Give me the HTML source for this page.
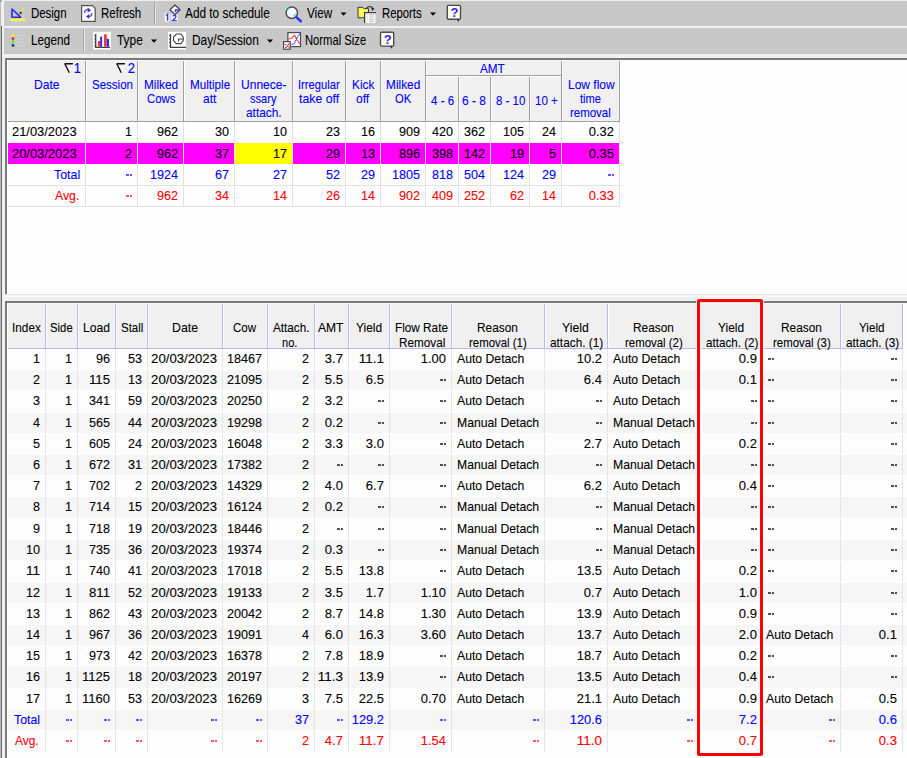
<!DOCTYPE html>
<html><head><meta charset="utf-8"><style>
html,body{margin:0;padding:0;}
body{width:907px;height:758px;overflow:hidden;position:relative;font-family:"Liberation Sans",sans-serif;font-size:13px;background:#f0f0f0;}
body div, body svg{position:absolute;}
.t{white-space:pre;line-height:15px;-webkit-text-stroke:0.1px currentColor;}
</style></head><body>
<div style="left:0px;top:0px;width:907px;height:758px;background:#f0f0f0;"></div>
<div style="left:0px;top:0px;width:1px;height:758px;background:#bcbcbc;"></div>
<div style="left:1px;top:26px;width:1px;height:732px;background:#666666;"></div>
<div style="left:0px;top:0px;width:2px;height:2px;background:#a8a8a8;"></div>
<div style="left:4px;top:1px;width:903px;height:25px;background:#c8c8c8;"></div>
<div style="left:4px;top:28px;width:903px;height:26px;background:#c8c8c8;"></div>
<div style="left:154px;top:2px;width:1px;height:23px;background:#a4a4a4;"></div>
<div style="left:155px;top:2px;width:1px;height:23px;background:#e4e4e4;"></div>
<div style="left:83px;top:29px;width:1px;height:24px;background:#a8a8a8;"></div>
<div style="left:84px;top:29px;width:1px;height:24px;background:#e8e8e8;"></div>
<div class="t" style="left:31.30px;top:6.2px;color:#000;font-size:14.2px;transform-origin:0 0;transform:scaleX(0.8054);">Design</div>
<div class="t" style="left:101.30px;top:6.2px;color:#000;font-size:14.2px;transform-origin:0 0;transform:scaleX(0.8105);">Refresh</div>
<div class="t" style="left:185.00px;top:6.2px;color:#000;font-size:14.2px;transform-origin:0 0;transform:scaleX(0.8336);">Add to schedule</div>
<div class="t" style="left:306.90px;top:6.2px;color:#000;font-size:14.2px;transform-origin:0 0;transform:scaleX(0.8246);">View</div>
<div class="t" style="left:381.50px;top:6.2px;color:#000;font-size:14.2px;transform-origin:0 0;transform:scaleX(0.7985);">Reports</div>
<div class="t" style="left:31.20px;top:33.3px;color:#000;font-size:14.2px;transform-origin:0 0;transform:scaleX(0.8209);">Legend</div>
<div class="t" style="left:117.30px;top:33.3px;color:#000;font-size:14.2px;transform-origin:0 0;transform:scaleX(0.8381);">Type</div>
<div class="t" style="left:191.60px;top:33.3px;color:#000;font-size:14.2px;transform-origin:0 0;transform:scaleX(0.8393);">Day/Session</div>
<div class="t" style="left:304.50px;top:33.3px;color:#000;font-size:14.2px;transform-origin:0 0;transform:scaleX(0.7914);">Normal Size</div>
<svg style="left:0;top:0" width="907" height="56" viewBox="0 0 907 56">
<!-- Design -->
<path d="M12 9 L12 17.2 L20.6 17.2 Z" fill="none" stroke="#2a2aff" stroke-width="1.6" stroke-linejoin="round"/>
<rect x="10.6" y="18.6" width="14.6" height="2.3" fill="#ffff30"/>
<path d="M21.6 11.6 L22.7 7.6" stroke="#f0f000" stroke-width="1.3"/>
<circle cx="20.6" cy="12.9" r="1.1" fill="#202020"/>
<!-- Refresh -->
<path d="M81.6 5.6 L92.5 5.6 L95.2 8.3 L95.2 21.3 L81.6 21.3 Z" fill="#fff" stroke="#505050" stroke-width="1.2"/>
<path d="M84.8 13 L84.8 11 Q85.5 9.5 88 9.5 L88.5 9.5" fill="none" stroke="#5a5aff" stroke-width="1.5"/>
<path d="M87.6 7.6 L91 10.2 L87.6 12.8 Z" fill="#3838c8"/>
<path d="M91.6 13 L91.6 15 Q91 16.5 89 16.5 L88.5 16.5" fill="none" stroke="#5a5aff" stroke-width="1.5"/>
<path d="M89.3 14 L86 16.5 L89.3 19 Z" fill="#3838c8"/>
<!-- Add to schedule -->
<rect x="164.8" y="13" width="4.8" height="8.6" fill="#fff"/>
<rect x="171" y="14.5" width="6.6" height="7.1" fill="#fff"/>
<path d="M166 15.5 L167.6 14.2 L167.6 20.8" fill="none" stroke="#3a3aff" stroke-width="1.5"/>
<path d="M172.6 16.2 Q174 15 175.6 15.6 Q176.4 16.6 175.2 18 L172.4 20.6 L176.8 20.6" fill="none" stroke="#3a3aff" stroke-width="1.4"/>
<path d="M175 5 L180 9.8 L175 14.6 L170 9.8 Z" fill="#fff" stroke="#404040" stroke-width="1.2" stroke-linejoin="round"/>
<path d="M175.5 12.3 L175.5 10 L179.2 10" fill="none" stroke="#3838ff" stroke-width="1.5"/>
<!-- Magnifier -->
<circle cx="291.8" cy="12.7" r="5.7" fill="#fff" stroke="#4a4a4a" stroke-width="1.5"/>
<path d="M287.3 10.8 Q287.8 8.6 289.8 7.9" fill="none" stroke="#20e0f0" stroke-width="1.1"/>
<path d="M293.3 16.3 L295.8 14" fill="none" stroke="#20e0f0" stroke-width="1.1"/>
<path d="M296.6 17.4 L300.8 21.3" stroke="#3232ff" stroke-width="2.6" stroke-linecap="round"/>
<!-- Reports -->
<path d="M358 7.3 L362.8 7.3 L364 8.6 L368.5 8.6 L368.5 17.8 L358 17.8 Z" fill="#ffff30" stroke="#303060" stroke-width="1"/>
<path d="M359.5 11 L366 11 L361 17" fill="none" stroke="#f8f8c0" stroke-width="1.2"/>
<path d="M366.5 8.2 Q369.5 5 372.8 7.8" fill="none" stroke="#505050" stroke-width="1.5"/>
<path d="M370.8 7.6 L374.5 8.2 L372.6 11 Z" fill="#303030"/>
<rect x="364.6" y="12.6" width="10.8" height="10.2" fill="#fff"/>
<path d="M364.6 23 L364.6 12.6 L376 12.6" fill="none" stroke="#404040" stroke-width="1.3"/>
<path d="M366.8 14.8 L367.6 14.8 M369 14.8 L374 14.8 M366.8 17 L367.6 17 M369 17 L374 17 M366.8 19.2 L367.6 19.2 M369 19.2 L374 19.2 M366.8 21.3 L367.6 21.3 M369 21.3 L374 21.3" stroke="#b0b0b0" stroke-width="0.9"/>
<!-- Help 1 -->
<rect x="447.3" y="5.4" width="13.2" height="13.8" rx="1" fill="#fffff0" stroke="#4c4c4c" stroke-width="1.4"/>
<text x="450.6" y="16.8" font-family="Liberation Sans" font-size="13" font-weight="bold" fill="#2a2aff">?</text>
<path d="M456.5 19 L458.8 22.2 L459 19 Z" fill="#303030"/>
<!-- Legend -->
<circle cx="13" cy="35.3" r="1.4" fill="#ffff00"/>
<circle cx="13" cy="38.7" r="1.4" fill="#ff2020"/>
<circle cx="13" cy="42" r="1.4" fill="#20ff20"/>
<circle cx="13" cy="45.4" r="1.4" fill="#2a2a9a"/>
<path d="M16.5 35.5 L24 35.5 M16.5 39 L24 39 M16.5 42.3 L24 42.3 M16.5 45.7 L24 45.7" stroke="#d4d4d4" stroke-width="1.2"/>
<!-- Type -->
<rect x="93" y="31.8" width="18" height="17.7" fill="#fff"/>
<path d="M95.7 34 L95.7 47.3 L110 47.3" fill="none" stroke="#404040" stroke-width="1.3"/>
<path d="M94.5 35.5 L95.5 35.5 M94.5 39 L95.5 39 M94.5 42.5 L95.5 42.5 M94.5 45.8 L95.5 45.8" stroke="#404040" stroke-width="1.3"/>
<rect x="97.9" y="41" width="2" height="5.7" fill="#ff2a2a"/>
<rect x="100.1" y="36.6" width="2" height="10.1" fill="#2a2aff"/>
<rect x="104.1" y="34.3" width="2.6" height="12.4" fill="#ff2a2a"/>
<rect x="106.8" y="38.8" width="2.2" height="7.9" fill="#2a2aff"/>
<!-- Day/Session -->
<rect x="168" y="31.8" width="18" height="17.7" fill="#fff"/>
<path d="M170.5 34 L170.5 47.3 L186 47.3" fill="none" stroke="#404040" stroke-width="1.3"/>
<path d="M169.3 35.5 L170.3 35.5 M169.3 39 L170.3 39 M169.3 42.5 L170.3 42.5 M169.3 45.8 L170.3 45.8" stroke="#404040" stroke-width="1.3"/>
<path d="M176.3 34 L180.8 34 L183.3 37.2 L183.3 40.6 L180.8 43.6 L176.3 43.6 L173.5 40.6 L173.5 37 Z" fill="#fff" stroke="#404040" stroke-width="1.1"/>
<path d="M178.6 41.5 L178.6 39 L183 39" fill="none" stroke="#404040" stroke-width="1.1"/>
<!-- Normal size -->
<rect x="287.9" y="32.6" width="12.6" height="14" fill="#fff" stroke="#4a4a4a" stroke-width="1.2"/>
<path d="M288.5 39 L291.5 38.5 L294.5 35.2 L297 40 L300 44" fill="none" stroke="#ff4040" stroke-width="1.2"/>
<path d="M290 44.5 L294 44 L296 40 L298 36 L300 33.5" fill="none" stroke="#3030ff" stroke-width="1.2" stroke-dasharray="1.2 0.6"/>
<rect x="283.6" y="41.6" width="6.6" height="7.6" fill="#fff" stroke="#404040" stroke-width="1.1"/>
<path d="M284.5 44.5 L286 44.5 L289.5 48 M285 47.5 L286.5 47.5 L289.5 43" fill="none" stroke="#d03070" stroke-width="1"/>
<!-- Help 2 -->
<rect x="380.5" y="32.3" width="13.2" height="13.8" rx="1" fill="#fffff0" stroke="#4c4c4c" stroke-width="1.4"/>
<text x="383.8" y="43.7" font-family="Liberation Sans" font-size="13" font-weight="bold" fill="#2a2aff">?</text>
<path d="M389.7 45.9 L392 49.1 L392.2 45.9 Z" fill="#303030"/>
<!-- dropdown arrows -->
<path d="M340.5 12.5 L346.5 12.5 L343.5 15.8 Z" fill="#000"/>
<path d="M430 12.5 L436 12.5 L433 15.8 Z" fill="#000"/>
<path d="M151 39.5 L157 39.5 L154 42.8 Z" fill="#000"/>
<path d="M267 39.5 L273 39.5 L270 42.8 Z" fill="#000"/>
</svg>

<div style="left:5px;top:58px;width:902px;height:2px;background:#7a7a7a;"></div>
<div style="left:5px;top:58px;width:2px;height:236px;background:#7a7a7a;"></div>
<div style="left:7px;top:60px;width:900px;height:1px;background:#f8f8f8;"></div>
<div style="left:7px;top:60px;width:1px;height:234px;background:#ffffff;"></div>
<div style="left:8px;top:61px;width:899px;height:233px;background:#fefefe;"></div>
<div style="left:5px;top:294px;width:902px;height:1px;background:#e4e4e4;"></div>
<div style="left:5px;top:295px;width:902px;height:2px;background:#f8f8f8;"></div>
<div style="left:8px;top:61px;width:612px;height:60px;background:#f0f0f0;"></div>
<div style="left:8px;top:121px;width:612px;height:1px;background:#a0a0a0;"></div>
<div style="left:85px;top:61px;width:1px;height:60px;background:#a0a0a0;"></div>
<div style="left:86px;top:61px;width:1px;height:60px;background:#ffffff;"></div>
<div style="left:137px;top:61px;width:1px;height:60px;background:#a0a0a0;"></div>
<div style="left:138px;top:61px;width:1px;height:60px;background:#ffffff;"></div>
<div style="left:183px;top:61px;width:1px;height:60px;background:#a0a0a0;"></div>
<div style="left:184px;top:61px;width:1px;height:60px;background:#ffffff;"></div>
<div style="left:234px;top:61px;width:1px;height:60px;background:#a0a0a0;"></div>
<div style="left:235px;top:61px;width:1px;height:60px;background:#ffffff;"></div>
<div style="left:292px;top:61px;width:1px;height:60px;background:#a0a0a0;"></div>
<div style="left:293px;top:61px;width:1px;height:60px;background:#ffffff;"></div>
<div style="left:345px;top:61px;width:1px;height:60px;background:#a0a0a0;"></div>
<div style="left:346px;top:61px;width:1px;height:60px;background:#ffffff;"></div>
<div style="left:380px;top:61px;width:1px;height:60px;background:#a0a0a0;"></div>
<div style="left:381px;top:61px;width:1px;height:60px;background:#ffffff;"></div>
<div style="left:425px;top:61px;width:1px;height:60px;background:#a0a0a0;"></div>
<div style="left:426px;top:61px;width:1px;height:60px;background:#ffffff;"></div>
<div style="left:458px;top:76px;width:1px;height:45px;background:#a0a0a0;"></div>
<div style="left:459px;top:76px;width:1px;height:45px;background:#ffffff;"></div>
<div style="left:490px;top:76px;width:1px;height:45px;background:#a0a0a0;"></div>
<div style="left:491px;top:76px;width:1px;height:45px;background:#ffffff;"></div>
<div style="left:529px;top:76px;width:1px;height:45px;background:#a0a0a0;"></div>
<div style="left:530px;top:76px;width:1px;height:45px;background:#ffffff;"></div>
<div style="left:561px;top:61px;width:1px;height:60px;background:#a0a0a0;"></div>
<div style="left:562px;top:61px;width:1px;height:60px;background:#ffffff;"></div>
<div style="left:619px;top:61px;width:1px;height:60px;background:#a0a0a0;"></div>
<div style="left:426px;top:75px;width:135px;height:1px;background:#a0a0a0;"></div>
<div style="left:426px;top:76px;width:135px;height:1px;background:#ffffff;"></div>
<div class="t" style="left:33.50px;top:76.9px;color:#0000ff;font-size:13.6px;transform-origin:0 0;transform:scaleX(0.8912);">Date</div>
<div class="t" style="left:91.60px;top:76.9px;color:#0000ff;font-size:13.6px;transform-origin:0 0;transform:scaleX(0.8473);">Session</div>
<div class="t" style="left:144.20px;top:76.9px;color:#0000ff;font-size:13.6px;transform-origin:0 0;transform:scaleX(0.8701);">Milked</div>
<div class="t" style="left:146.50px;top:91.10000000000001px;color:#0000ff;font-size:13.6px;transform-origin:0 0;transform:scaleX(0.8409);">Cows</div>
<div class="t" style="left:189.50px;top:76.9px;color:#0000ff;font-size:13.6px;transform-origin:0 0;transform:scaleX(0.8578);">Multiple</div>
<div class="t" style="left:203.20px;top:91.10000000000001px;color:#0000ff;font-size:13.6px;transform-origin:0 0;transform:scaleX(0.8793);">att</div>
<div class="t" style="left:240.70px;top:76.9px;color:#0000ff;font-size:13.6px;transform-origin:0 0;transform:scaleX(0.8851);">Unnece-</div>
<div class="t" style="left:249.80px;top:91.10000000000001px;color:#0000ff;font-size:13.6px;transform-origin:0 0;transform:scaleX(0.8155);">ssary</div>
<div class="t" style="left:245.70px;top:105.30000000000001px;color:#0000ff;font-size:13.6px;transform-origin:0 0;transform:scaleX(0.8719);">attach.</div>
<div class="t" style="left:297.80px;top:76.9px;color:#0000ff;font-size:13.6px;transform-origin:0 0;transform:scaleX(0.8235);">Irregular</div>
<div class="t" style="left:298.60px;top:91.10000000000001px;color:#0000ff;font-size:13.6px;transform-origin:0 0;transform:scaleX(0.9057);">take off</div>
<div class="t" style="left:351.50px;top:76.9px;color:#0000ff;font-size:13.6px;transform-origin:0 0;transform:scaleX(0.8708);">Kick</div>
<div class="t" style="left:355.70px;top:91.10000000000001px;color:#0000ff;font-size:13.6px;transform-origin:0 0;transform:scaleX(0.8858);">off</div>
<div class="t" style="left:385.70px;top:76.9px;color:#0000ff;font-size:13.6px;transform-origin:0 0;transform:scaleX(0.8727);">Milked</div>
<div class="t" style="left:394.80px;top:91.10000000000001px;color:#0000ff;font-size:13.6px;transform-origin:0 0;transform:scaleX(0.8243);">OK</div>
<div class="t" style="left:567.70px;top:76.9px;color:#0000ff;font-size:13.6px;transform-origin:0 0;transform:scaleX(0.8819);">Low flow</div>
<div class="t" style="left:580.10px;top:91.10000000000001px;color:#0000ff;font-size:13.6px;transform-origin:0 0;transform:scaleX(0.8173);">time</div>
<div class="t" style="left:570.20px;top:105.30000000000001px;color:#0000ff;font-size:13.6px;transform-origin:0 0;transform:scaleX(0.8435);">removal</div>
<div class="t" style="left:480.00px;top:61.3px;color:#0000ff;font-size:13.6px;transform-origin:0 0;transform:scaleX(0.8639);">AMT</div>
<div class="t" style="left:430.90px;top:93.3px;color:#0000ff;font-size:13.6px;transform-origin:0 0;transform:scaleX(0.8490);">4 - 6</div>
<div class="t" style="left:462.30px;top:93.3px;color:#0000ff;font-size:13.6px;transform-origin:0 0;transform:scaleX(0.8747);">6 - 8</div>
<div class="t" style="left:495.80px;top:93.3px;color:#0000ff;font-size:13.6px;transform-origin:0 0;transform:scaleX(0.8425);">8 - 10</div>
<div class="t" style="left:534.70px;top:93.3px;color:#0000ff;font-size:13.6px;transform-origin:0 0;transform:scaleX(0.8492);">10 +</div>
<svg style="left:64px;top:62px" width="12" height="13" viewBox="0 0 12 13"><path d="M9 1.8 L5.5 10.8" stroke="#fff" stroke-width="1.2"/><path d="M0.5 1.8 L9 1.8 M0.8 1.8 L5.3 10.8" fill="none" stroke="#111" stroke-width="1.4"/></svg>
<div class="t" style="left:-219.5px;top:60.5px;width:300px;text-align:right;color:#0000ff;font-size:13.6px;transform-origin:100% 0;transform:scaleX(0.9277);font-size:14px;">1</div>
<svg style="left:116px;top:62px" width="12" height="13" viewBox="0 0 12 13"><path d="M9 1.8 L5.5 10.8" stroke="#fff" stroke-width="1.2"/><path d="M0.5 1.8 L9 1.8 M0.8 1.8 L5.3 10.8" fill="none" stroke="#111" stroke-width="1.4"/></svg>
<div class="t" style="left:-165px;top:60.5px;width:300px;text-align:right;color:#0000ff;font-size:13.6px;transform-origin:100% 0;transform:scaleX(0.9277);font-size:14px;">2</div>
<div style="left:8px;top:143px;width:611px;height:21px;background:#ff00ff;"></div>
<div style="left:235px;top:143px;width:57px;height:21px;background:#ffff00;"></div>
<div style="left:8px;top:185px;width:612px;height:1px;background:#e2e2e2;"></div>
<div style="left:8px;top:206px;width:612px;height:1px;background:#e2e2e2;"></div>
<div style="left:85px;top:122px;width:1px;height:84px;background:#e2e2e2;"></div>
<div style="left:137px;top:122px;width:1px;height:84px;background:#e2e2e2;"></div>
<div style="left:183px;top:122px;width:1px;height:84px;background:#e2e2e2;"></div>
<div style="left:234px;top:122px;width:1px;height:84px;background:#e2e2e2;"></div>
<div style="left:292px;top:122px;width:1px;height:84px;background:#e2e2e2;"></div>
<div style="left:345px;top:122px;width:1px;height:84px;background:#e2e2e2;"></div>
<div style="left:380px;top:122px;width:1px;height:84px;background:#e2e2e2;"></div>
<div style="left:425px;top:122px;width:1px;height:84px;background:#e2e2e2;"></div>
<div style="left:458px;top:122px;width:1px;height:84px;background:#e2e2e2;"></div>
<div style="left:490px;top:122px;width:1px;height:84px;background:#e2e2e2;"></div>
<div style="left:529px;top:122px;width:1px;height:84px;background:#e2e2e2;"></div>
<div style="left:561px;top:122px;width:1px;height:84px;background:#e2e2e2;"></div>
<div style="left:619px;top:122px;width:1px;height:84px;background:#e2e2e2;"></div>
<div class="t" style="left:12.30px;top:124.0px;color:#000;font-size:13.6px;transform-origin:0 0;transform:scaleX(0.9491);">21/03/2023</div>
<div class="t" style="left:-167.6px;top:124.0px;width:300px;text-align:right;color:#000;font-size:13.6px;transform-origin:100% 0;transform:scaleX(0.9277);">1</div>
<div class="t" style="left:-121.6px;top:124.0px;width:300px;text-align:right;color:#000;font-size:13.6px;transform-origin:100% 0;transform:scaleX(0.9277);">962</div>
<div class="t" style="left:-70.6px;top:124.0px;width:300px;text-align:right;color:#000;font-size:13.6px;transform-origin:100% 0;transform:scaleX(0.9277);">30</div>
<div class="t" style="left:-12.600000000000023px;top:124.0px;width:300px;text-align:right;color:#000;font-size:13.6px;transform-origin:100% 0;transform:scaleX(0.9277);">10</div>
<div class="t" style="left:40.39999999999998px;top:124.0px;width:300px;text-align:right;color:#000;font-size:13.6px;transform-origin:100% 0;transform:scaleX(0.9277);">23</div>
<div class="t" style="left:75.39999999999998px;top:124.0px;width:300px;text-align:right;color:#000;font-size:13.6px;transform-origin:100% 0;transform:scaleX(0.9277);">16</div>
<div class="t" style="left:120.39999999999998px;top:124.0px;width:300px;text-align:right;color:#000;font-size:13.6px;transform-origin:100% 0;transform:scaleX(0.9277);">909</div>
<div class="t" style="left:153.39999999999998px;top:124.0px;width:300px;text-align:right;color:#000;font-size:13.6px;transform-origin:100% 0;transform:scaleX(0.9277);">420</div>
<div class="t" style="left:185.39999999999998px;top:124.0px;width:300px;text-align:right;color:#000;font-size:13.6px;transform-origin:100% 0;transform:scaleX(0.9277);">362</div>
<div class="t" style="left:224.39999999999998px;top:124.0px;width:300px;text-align:right;color:#000;font-size:13.6px;transform-origin:100% 0;transform:scaleX(0.9277);">105</div>
<div class="t" style="left:256.4px;top:124.0px;width:300px;text-align:right;color:#000;font-size:13.6px;transform-origin:100% 0;transform:scaleX(0.9277);">24</div>
<div class="t" style="left:314.4px;top:124.0px;width:300px;text-align:right;color:#000;font-size:13.6px;transform-origin:100% 0;transform:scaleX(0.9507);">0.32</div>
<div class="t" style="left:12.30px;top:145.5px;color:#000;font-size:13.6px;transform-origin:0 0;transform:scaleX(0.9491);">20/03/2023</div>
<div class="t" style="left:-167.6px;top:145.5px;width:300px;text-align:right;color:#000;font-size:13.6px;transform-origin:100% 0;transform:scaleX(0.9277);">2</div>
<div class="t" style="left:-121.6px;top:145.5px;width:300px;text-align:right;color:#000;font-size:13.6px;transform-origin:100% 0;transform:scaleX(0.9277);">962</div>
<div class="t" style="left:-70.6px;top:145.5px;width:300px;text-align:right;color:#000;font-size:13.6px;transform-origin:100% 0;transform:scaleX(0.9277);">37</div>
<div class="t" style="left:-12.600000000000023px;top:145.5px;width:300px;text-align:right;color:#000;font-size:13.6px;transform-origin:100% 0;transform:scaleX(0.9277);">17</div>
<div class="t" style="left:40.39999999999998px;top:145.5px;width:300px;text-align:right;color:#000;font-size:13.6px;transform-origin:100% 0;transform:scaleX(0.9277);">29</div>
<div class="t" style="left:75.39999999999998px;top:145.5px;width:300px;text-align:right;color:#000;font-size:13.6px;transform-origin:100% 0;transform:scaleX(0.9277);">13</div>
<div class="t" style="left:120.39999999999998px;top:145.5px;width:300px;text-align:right;color:#000;font-size:13.6px;transform-origin:100% 0;transform:scaleX(0.9277);">896</div>
<div class="t" style="left:153.39999999999998px;top:145.5px;width:300px;text-align:right;color:#000;font-size:13.6px;transform-origin:100% 0;transform:scaleX(0.9277);">398</div>
<div class="t" style="left:185.39999999999998px;top:145.5px;width:300px;text-align:right;color:#000;font-size:13.6px;transform-origin:100% 0;transform:scaleX(0.9277);">142</div>
<div class="t" style="left:224.39999999999998px;top:145.5px;width:300px;text-align:right;color:#000;font-size:13.6px;transform-origin:100% 0;transform:scaleX(0.9277);">19</div>
<div class="t" style="left:256.4px;top:145.5px;width:300px;text-align:right;color:#000;font-size:13.6px;transform-origin:100% 0;transform:scaleX(0.9277);">5</div>
<div class="t" style="left:314.4px;top:145.5px;width:300px;text-align:right;color:#000;font-size:13.6px;transform-origin:100% 0;transform:scaleX(0.9507);">0.35</div>
<div class="t" style="left:54.10px;top:167.0px;color:#0000ff;font-size:13.6px;transform-origin:0 0;transform:scaleX(0.9121);">Total</div>
<div style="left:126px;top:174px;width:3px;height:2px;background:#5a5aff;"></div>
<div style="left:130px;top:174px;width:2px;height:2px;background:#5a5aff;"></div>
<div class="t" style="left:-121.6px;top:167.0px;width:300px;text-align:right;color:#0000ff;font-size:13.6px;transform-origin:100% 0;transform:scaleX(0.9277);">1924</div>
<div class="t" style="left:-70.6px;top:167.0px;width:300px;text-align:right;color:#0000ff;font-size:13.6px;transform-origin:100% 0;transform:scaleX(0.9277);">67</div>
<div class="t" style="left:-12.600000000000023px;top:167.0px;width:300px;text-align:right;color:#0000ff;font-size:13.6px;transform-origin:100% 0;transform:scaleX(0.9277);">27</div>
<div class="t" style="left:40.39999999999998px;top:167.0px;width:300px;text-align:right;color:#0000ff;font-size:13.6px;transform-origin:100% 0;transform:scaleX(0.9277);">52</div>
<div class="t" style="left:75.39999999999998px;top:167.0px;width:300px;text-align:right;color:#0000ff;font-size:13.6px;transform-origin:100% 0;transform:scaleX(0.9277);">29</div>
<div class="t" style="left:120.39999999999998px;top:167.0px;width:300px;text-align:right;color:#0000ff;font-size:13.6px;transform-origin:100% 0;transform:scaleX(0.9277);">1805</div>
<div class="t" style="left:153.39999999999998px;top:167.0px;width:300px;text-align:right;color:#0000ff;font-size:13.6px;transform-origin:100% 0;transform:scaleX(0.9277);">818</div>
<div class="t" style="left:185.39999999999998px;top:167.0px;width:300px;text-align:right;color:#0000ff;font-size:13.6px;transform-origin:100% 0;transform:scaleX(0.9277);">504</div>
<div class="t" style="left:224.39999999999998px;top:167.0px;width:300px;text-align:right;color:#0000ff;font-size:13.6px;transform-origin:100% 0;transform:scaleX(0.9277);">124</div>
<div class="t" style="left:256.4px;top:167.0px;width:300px;text-align:right;color:#0000ff;font-size:13.6px;transform-origin:100% 0;transform:scaleX(0.9277);">29</div>
<div style="left:608px;top:174px;width:3px;height:2px;background:#5a5aff;"></div>
<div style="left:612px;top:174px;width:2px;height:2px;background:#5a5aff;"></div>
<div class="t" style="left:55.00px;top:188.0px;color:#ff0000;font-size:13.6px;transform-origin:0 0;transform:scaleX(0.9011);">Avg.</div>
<div style="left:126px;top:195px;width:3px;height:2px;background:#ff5a5a;"></div>
<div style="left:130px;top:195px;width:2px;height:2px;background:#ff5a5a;"></div>
<div class="t" style="left:-121.6px;top:188.0px;width:300px;text-align:right;color:#ff0000;font-size:13.6px;transform-origin:100% 0;transform:scaleX(0.9277);">962</div>
<div class="t" style="left:-70.6px;top:188.0px;width:300px;text-align:right;color:#ff0000;font-size:13.6px;transform-origin:100% 0;transform:scaleX(0.9277);">34</div>
<div class="t" style="left:-12.600000000000023px;top:188.0px;width:300px;text-align:right;color:#ff0000;font-size:13.6px;transform-origin:100% 0;transform:scaleX(0.9277);">14</div>
<div class="t" style="left:40.39999999999998px;top:188.0px;width:300px;text-align:right;color:#ff0000;font-size:13.6px;transform-origin:100% 0;transform:scaleX(0.9277);">26</div>
<div class="t" style="left:75.39999999999998px;top:188.0px;width:300px;text-align:right;color:#ff0000;font-size:13.6px;transform-origin:100% 0;transform:scaleX(0.9277);">14</div>
<div class="t" style="left:120.39999999999998px;top:188.0px;width:300px;text-align:right;color:#ff0000;font-size:13.6px;transform-origin:100% 0;transform:scaleX(0.9277);">902</div>
<div class="t" style="left:153.39999999999998px;top:188.0px;width:300px;text-align:right;color:#ff0000;font-size:13.6px;transform-origin:100% 0;transform:scaleX(0.9277);">409</div>
<div class="t" style="left:185.39999999999998px;top:188.0px;width:300px;text-align:right;color:#ff0000;font-size:13.6px;transform-origin:100% 0;transform:scaleX(0.9277);">252</div>
<div class="t" style="left:224.39999999999998px;top:188.0px;width:300px;text-align:right;color:#ff0000;font-size:13.6px;transform-origin:100% 0;transform:scaleX(0.9277);">62</div>
<div class="t" style="left:256.4px;top:188.0px;width:300px;text-align:right;color:#ff0000;font-size:13.6px;transform-origin:100% 0;transform:scaleX(0.9277);">14</div>
<div class="t" style="left:314.4px;top:188.0px;width:300px;text-align:right;color:#ff0000;font-size:13.6px;transform-origin:100% 0;transform:scaleX(0.9507);">0.33</div>
<div style="left:5px;top:301px;width:902px;height:2px;background:#7a7a7a;"></div>
<div style="left:5px;top:301px;width:2px;height:457px;background:#7a7a7a;"></div>
<div style="left:7px;top:303px;width:900px;height:1px;background:#f8f8f8;"></div>
<div style="left:7px;top:303px;width:1px;height:455px;background:#ffffff;"></div>
<div style="left:8px;top:304px;width:899px;height:454px;background:#fdfdfd;"></div>
<div style="left:8px;top:304px;width:895px;height:44px;background:#f0f0f0;"></div>
<div style="left:8px;top:348px;width:895px;height:1px;background:#b8b8f4;"></div>
<div style="left:45px;top:304px;width:1px;height:45px;background:#b8b8f4;"></div>
<div style="left:46px;top:304px;width:1px;height:44px;background:#ffffff;"></div>
<div style="left:77px;top:304px;width:1px;height:45px;background:#b8b8f4;"></div>
<div style="left:78px;top:304px;width:1px;height:44px;background:#ffffff;"></div>
<div style="left:115px;top:304px;width:1px;height:45px;background:#b8b8f4;"></div>
<div style="left:116px;top:304px;width:1px;height:44px;background:#ffffff;"></div>
<div style="left:147px;top:304px;width:1px;height:45px;background:#b8b8f4;"></div>
<div style="left:148px;top:304px;width:1px;height:44px;background:#ffffff;"></div>
<div style="left:222px;top:304px;width:1px;height:45px;background:#b8b8f4;"></div>
<div style="left:223px;top:304px;width:1px;height:44px;background:#ffffff;"></div>
<div style="left:267px;top:304px;width:1px;height:45px;background:#b8b8f4;"></div>
<div style="left:268px;top:304px;width:1px;height:44px;background:#ffffff;"></div>
<div style="left:314px;top:304px;width:1px;height:45px;background:#b8b8f4;"></div>
<div style="left:315px;top:304px;width:1px;height:44px;background:#ffffff;"></div>
<div style="left:348px;top:304px;width:1px;height:45px;background:#b8b8f4;"></div>
<div style="left:349px;top:304px;width:1px;height:44px;background:#ffffff;"></div>
<div style="left:389px;top:304px;width:1px;height:45px;background:#b8b8f4;"></div>
<div style="left:390px;top:304px;width:1px;height:44px;background:#ffffff;"></div>
<div style="left:451px;top:304px;width:1px;height:45px;background:#b8b8f4;"></div>
<div style="left:452px;top:304px;width:1px;height:44px;background:#ffffff;"></div>
<div style="left:544px;top:304px;width:1px;height:45px;background:#b8b8f4;"></div>
<div style="left:545px;top:304px;width:1px;height:44px;background:#ffffff;"></div>
<div style="left:607px;top:304px;width:1px;height:45px;background:#b8b8f4;"></div>
<div style="left:608px;top:304px;width:1px;height:44px;background:#ffffff;"></div>
<div style="left:698px;top:304px;width:1px;height:45px;background:#b8b8f4;"></div>
<div style="left:699px;top:304px;width:1px;height:44px;background:#ffffff;"></div>
<div style="left:762px;top:304px;width:1px;height:45px;background:#b8b8f4;"></div>
<div style="left:763px;top:304px;width:1px;height:44px;background:#ffffff;"></div>
<div style="left:840px;top:304px;width:1px;height:45px;background:#b8b8f4;"></div>
<div style="left:841px;top:304px;width:1px;height:44px;background:#ffffff;"></div>
<div style="left:902px;top:304px;width:1px;height:45px;background:#b8b8f4;"></div>
<div class="t" style="left:12.30px;top:320.2px;color:#000;font-size:13.6px;transform-origin:0 0;transform:scaleX(0.8686);">Index</div>
<div class="t" style="left:50.40px;top:320.2px;color:#000;font-size:13.6px;transform-origin:0 0;transform:scaleX(0.8340);">Side</div>
<div class="t" style="left:83.30px;top:320.2px;color:#000;font-size:13.6px;transform-origin:0 0;transform:scaleX(0.8892);">Load</div>
<div class="t" style="left:120.70px;top:320.2px;color:#000;font-size:13.6px;transform-origin:0 0;transform:scaleX(0.8430);">Stall</div>
<div class="t" style="left:171.50px;top:320.2px;color:#000;font-size:13.6px;transform-origin:0 0;transform:scaleX(0.9051);">Date</div>
<div class="t" style="left:233.00px;top:320.2px;color:#000;font-size:13.6px;transform-origin:0 0;transform:scaleX(0.8478);">Cow</div>
<div class="t" style="left:272.50px;top:320.2px;color:#000;font-size:13.6px;transform-origin:0 0;transform:scaleX(0.8622);">Attach.</div>
<div class="t" style="left:282.30px;top:334.59999999999997px;color:#000;font-size:13.6px;transform-origin:0 0;transform:scaleX(0.8146);">no.</div>
<div class="t" style="left:317.80px;top:320.2px;color:#000;font-size:13.6px;transform-origin:0 0;transform:scaleX(0.8883);">AMT</div>
<div class="t" style="left:356.40px;top:320.2px;color:#000;font-size:13.6px;transform-origin:0 0;transform:scaleX(0.8811);">Yield</div>
<div class="t" style="left:395.00px;top:320.2px;color:#000;font-size:13.6px;transform-origin:0 0;transform:scaleX(0.8657);">Flow Rate</div>
<div class="t" style="left:398.90px;top:334.59999999999997px;color:#000;font-size:13.6px;transform-origin:0 0;transform:scaleX(0.8628);">Removal</div>
<div class="t" style="left:477.00px;top:320.2px;color:#000;font-size:13.6px;transform-origin:0 0;transform:scaleX(0.8726);">Reason</div>
<div class="t" style="left:469.40px;top:334.59999999999997px;color:#000;font-size:13.6px;transform-origin:0 0;transform:scaleX(0.8405);">removal (1)</div>
<div class="t" style="left:562.40px;top:320.2px;color:#000;font-size:13.6px;transform-origin:0 0;transform:scaleX(0.8979);">Yield</div>
<div class="t" style="left:550.00px;top:334.59999999999997px;color:#000;font-size:13.6px;transform-origin:0 0;transform:scaleX(0.8705);">attach. (1)</div>
<div class="t" style="left:633.40px;top:320.2px;color:#000;font-size:13.6px;transform-origin:0 0;transform:scaleX(0.8726);">Reason</div>
<div class="t" style="left:624.60px;top:334.59999999999997px;color:#000;font-size:13.6px;transform-origin:0 0;transform:scaleX(0.8405);">removal (2)</div>
<div class="t" style="left:717.80px;top:320.2px;color:#000;font-size:13.6px;transform-origin:0 0;transform:scaleX(0.8811);">Yield</div>
<div class="t" style="left:705.50px;top:334.59999999999997px;color:#000;font-size:13.6px;transform-origin:0 0;transform:scaleX(0.8558);">attach. (2)</div>
<div class="t" style="left:780.90px;top:320.2px;color:#000;font-size:13.6px;transform-origin:0 0;transform:scaleX(0.8726);">Reason</div>
<div class="t" style="left:772.90px;top:334.59999999999997px;color:#000;font-size:13.6px;transform-origin:0 0;transform:scaleX(0.8391);">removal (3)</div>
<div class="t" style="left:858.80px;top:320.2px;color:#000;font-size:13.6px;transform-origin:0 0;transform:scaleX(0.8576);">Yield</div>
<div class="t" style="left:845.70px;top:334.59999999999997px;color:#000;font-size:13.6px;transform-origin:0 0;transform:scaleX(0.8705);">attach. (3)</div>
<div style="left:45px;top:349px;width:1px;height:20px;background:#e4e4e4;"></div>
<div style="left:77px;top:349px;width:1px;height:20px;background:#e4e4e4;"></div>
<div style="left:115px;top:349px;width:1px;height:20px;background:#e4e4e4;"></div>
<div style="left:147px;top:349px;width:1px;height:20px;background:#e4e4e4;"></div>
<div style="left:222px;top:349px;width:1px;height:20px;background:#e4e4e4;"></div>
<div style="left:267px;top:349px;width:1px;height:20px;background:#e4e4e4;"></div>
<div style="left:314px;top:349px;width:1px;height:20px;background:#e4e4e4;"></div>
<div style="left:348px;top:349px;width:1px;height:20px;background:#e4e4e4;"></div>
<div style="left:389px;top:349px;width:1px;height:20px;background:#e4e4e4;"></div>
<div style="left:451px;top:349px;width:1px;height:20px;background:#e4e4e4;"></div>
<div style="left:544px;top:349px;width:1px;height:20px;background:#e4e4e4;"></div>
<div style="left:607px;top:349px;width:1px;height:20px;background:#e4e4e4;"></div>
<div style="left:698px;top:349px;width:1px;height:20px;background:#e4e4e4;"></div>
<div style="left:762px;top:349px;width:1px;height:20px;background:#e4e4e4;"></div>
<div style="left:840px;top:349px;width:1px;height:20px;background:#e4e4e4;"></div>
<div style="left:902px;top:349px;width:1px;height:20px;background:#e4e4e4;"></div>
<div class="t" style="left:-259.8px;top:350.7px;width:300px;text-align:right;color:#000;font-size:13.6px;transform-origin:100% 0;transform:scaleX(0.9277);">1</div>
<div class="t" style="left:-227.8px;top:350.7px;width:300px;text-align:right;color:#000;font-size:13.6px;transform-origin:100% 0;transform:scaleX(0.9277);">1</div>
<div class="t" style="left:-189.8px;top:350.7px;width:300px;text-align:right;color:#000;font-size:13.6px;transform-origin:100% 0;transform:scaleX(0.9277);">96</div>
<div class="t" style="left:-157.8px;top:350.7px;width:300px;text-align:right;color:#000;font-size:13.6px;transform-origin:100% 0;transform:scaleX(0.9277);">53</div>
<div class="t" style="left:-82.80000000000001px;top:350.7px;width:300px;text-align:right;color:#000;font-size:13.6px;transform-origin:100% 0;transform:scaleX(0.9687);">20/03/2023</div>
<div class="t" style="left:-37.80000000000001px;top:350.7px;width:300px;text-align:right;color:#000;font-size:13.6px;transform-origin:100% 0;transform:scaleX(0.9277);">18467</div>
<div class="t" style="left:9.199999999999989px;top:350.7px;width:300px;text-align:right;color:#000;font-size:13.6px;transform-origin:100% 0;transform:scaleX(0.9277);">2</div>
<div class="t" style="left:43.19999999999999px;top:350.7px;width:300px;text-align:right;color:#000;font-size:13.6px;transform-origin:100% 0;transform:scaleX(0.9599);">3.7</div>
<div class="t" style="left:84.19999999999999px;top:350.7px;width:300px;text-align:right;color:#000;font-size:13.6px;transform-origin:100% 0;transform:scaleX(0.9884);">11.1</div>
<div class="t" style="left:146.2px;top:350.7px;width:300px;text-align:right;color:#000;font-size:13.6px;transform-origin:100% 0;transform:scaleX(0.9507);">1.00</div>
<div class="t" style="left:456.60px;top:350.7px;color:#000;font-size:13.6px;transform-origin:0 0;transform:scaleX(0.8991);">Auto Detach</div>
<div class="t" style="left:302.20000000000005px;top:350.7px;width:300px;text-align:right;color:#000;font-size:13.6px;transform-origin:100% 0;transform:scaleX(0.9507);">10.2</div>
<div class="t" style="left:612.60px;top:350.7px;color:#000;font-size:13.6px;transform-origin:0 0;transform:scaleX(0.8991);">Auto Detach</div>
<div class="t" style="left:457.20000000000005px;top:350.7px;width:300px;text-align:right;color:#000;font-size:13.6px;transform-origin:100% 0;transform:scaleX(0.9599);">0.9</div>
<div style="left:768px;top:358px;width:3px;height:2px;background:#505050;"></div>
<div style="left:772px;top:358px;width:2px;height:2px;background:#505050;"></div>
<div style="left:891px;top:358px;width:3px;height:2px;background:#505050;"></div>
<div style="left:895px;top:358px;width:2px;height:2px;background:#505050;"></div>
<div style="left:8px;top:370px;width:899px;height:20px;background:#f6f6f6;"></div>
<div style="left:45px;top:370px;width:1px;height:20px;background:#e4e4e4;"></div>
<div style="left:77px;top:370px;width:1px;height:20px;background:#e4e4e4;"></div>
<div style="left:115px;top:370px;width:1px;height:20px;background:#e4e4e4;"></div>
<div style="left:147px;top:370px;width:1px;height:20px;background:#e4e4e4;"></div>
<div style="left:222px;top:370px;width:1px;height:20px;background:#e4e4e4;"></div>
<div style="left:267px;top:370px;width:1px;height:20px;background:#e4e4e4;"></div>
<div style="left:314px;top:370px;width:1px;height:20px;background:#e4e4e4;"></div>
<div style="left:348px;top:370px;width:1px;height:20px;background:#e4e4e4;"></div>
<div style="left:389px;top:370px;width:1px;height:20px;background:#e4e4e4;"></div>
<div style="left:451px;top:370px;width:1px;height:20px;background:#e4e4e4;"></div>
<div style="left:544px;top:370px;width:1px;height:20px;background:#e4e4e4;"></div>
<div style="left:607px;top:370px;width:1px;height:20px;background:#e4e4e4;"></div>
<div style="left:698px;top:370px;width:1px;height:20px;background:#e4e4e4;"></div>
<div style="left:762px;top:370px;width:1px;height:20px;background:#e4e4e4;"></div>
<div style="left:840px;top:370px;width:1px;height:20px;background:#e4e4e4;"></div>
<div style="left:902px;top:370px;width:1px;height:20px;background:#e4e4e4;"></div>
<div class="t" style="left:-259.8px;top:371.7px;width:300px;text-align:right;color:#000;font-size:13.6px;transform-origin:100% 0;transform:scaleX(0.9277);">2</div>
<div class="t" style="left:-227.8px;top:371.7px;width:300px;text-align:right;color:#000;font-size:13.6px;transform-origin:100% 0;transform:scaleX(0.9277);">1</div>
<div class="t" style="left:-189.8px;top:371.7px;width:300px;text-align:right;color:#000;font-size:13.6px;transform-origin:100% 0;transform:scaleX(0.9709);">115</div>
<div class="t" style="left:-157.8px;top:371.7px;width:300px;text-align:right;color:#000;font-size:13.6px;transform-origin:100% 0;transform:scaleX(0.9277);">13</div>
<div class="t" style="left:-82.80000000000001px;top:371.7px;width:300px;text-align:right;color:#000;font-size:13.6px;transform-origin:100% 0;transform:scaleX(0.9687);">20/03/2023</div>
<div class="t" style="left:-37.80000000000001px;top:371.7px;width:300px;text-align:right;color:#000;font-size:13.6px;transform-origin:100% 0;transform:scaleX(0.9277);">21095</div>
<div class="t" style="left:9.199999999999989px;top:371.7px;width:300px;text-align:right;color:#000;font-size:13.6px;transform-origin:100% 0;transform:scaleX(0.9277);">2</div>
<div class="t" style="left:43.19999999999999px;top:371.7px;width:300px;text-align:right;color:#000;font-size:13.6px;transform-origin:100% 0;transform:scaleX(0.9599);">5.5</div>
<div class="t" style="left:84.19999999999999px;top:371.7px;width:300px;text-align:right;color:#000;font-size:13.6px;transform-origin:100% 0;transform:scaleX(0.9599);">6.5</div>
<div style="left:440px;top:379px;width:3px;height:2px;background:#505050;"></div>
<div style="left:444px;top:379px;width:2px;height:2px;background:#505050;"></div>
<div class="t" style="left:456.60px;top:371.7px;color:#000;font-size:13.6px;transform-origin:0 0;transform:scaleX(0.8991);">Auto Detach</div>
<div class="t" style="left:302.20000000000005px;top:371.7px;width:300px;text-align:right;color:#000;font-size:13.6px;transform-origin:100% 0;transform:scaleX(0.9599);">6.4</div>
<div class="t" style="left:612.60px;top:371.7px;color:#000;font-size:13.6px;transform-origin:0 0;transform:scaleX(0.8991);">Auto Detach</div>
<div class="t" style="left:457.20000000000005px;top:371.7px;width:300px;text-align:right;color:#000;font-size:13.6px;transform-origin:100% 0;transform:scaleX(0.9599);">0.1</div>
<div style="left:768px;top:379px;width:3px;height:2px;background:#505050;"></div>
<div style="left:772px;top:379px;width:2px;height:2px;background:#505050;"></div>
<div style="left:891px;top:379px;width:3px;height:2px;background:#505050;"></div>
<div style="left:895px;top:379px;width:2px;height:2px;background:#505050;"></div>
<div style="left:45px;top:391px;width:1px;height:21px;background:#e4e4e4;"></div>
<div style="left:77px;top:391px;width:1px;height:21px;background:#e4e4e4;"></div>
<div style="left:115px;top:391px;width:1px;height:21px;background:#e4e4e4;"></div>
<div style="left:147px;top:391px;width:1px;height:21px;background:#e4e4e4;"></div>
<div style="left:222px;top:391px;width:1px;height:21px;background:#e4e4e4;"></div>
<div style="left:267px;top:391px;width:1px;height:21px;background:#e4e4e4;"></div>
<div style="left:314px;top:391px;width:1px;height:21px;background:#e4e4e4;"></div>
<div style="left:348px;top:391px;width:1px;height:21px;background:#e4e4e4;"></div>
<div style="left:389px;top:391px;width:1px;height:21px;background:#e4e4e4;"></div>
<div style="left:451px;top:391px;width:1px;height:21px;background:#e4e4e4;"></div>
<div style="left:544px;top:391px;width:1px;height:21px;background:#e4e4e4;"></div>
<div style="left:607px;top:391px;width:1px;height:21px;background:#e4e4e4;"></div>
<div style="left:698px;top:391px;width:1px;height:21px;background:#e4e4e4;"></div>
<div style="left:762px;top:391px;width:1px;height:21px;background:#e4e4e4;"></div>
<div style="left:840px;top:391px;width:1px;height:21px;background:#e4e4e4;"></div>
<div style="left:902px;top:391px;width:1px;height:21px;background:#e4e4e4;"></div>
<div class="t" style="left:-259.8px;top:393.2px;width:300px;text-align:right;color:#000;font-size:13.6px;transform-origin:100% 0;transform:scaleX(0.9277);">3</div>
<div class="t" style="left:-227.8px;top:393.2px;width:300px;text-align:right;color:#000;font-size:13.6px;transform-origin:100% 0;transform:scaleX(0.9277);">1</div>
<div class="t" style="left:-189.8px;top:393.2px;width:300px;text-align:right;color:#000;font-size:13.6px;transform-origin:100% 0;transform:scaleX(0.9277);">341</div>
<div class="t" style="left:-157.8px;top:393.2px;width:300px;text-align:right;color:#000;font-size:13.6px;transform-origin:100% 0;transform:scaleX(0.9277);">59</div>
<div class="t" style="left:-82.80000000000001px;top:393.2px;width:300px;text-align:right;color:#000;font-size:13.6px;transform-origin:100% 0;transform:scaleX(0.9687);">20/03/2023</div>
<div class="t" style="left:-37.80000000000001px;top:393.2px;width:300px;text-align:right;color:#000;font-size:13.6px;transform-origin:100% 0;transform:scaleX(0.9277);">20250</div>
<div class="t" style="left:9.199999999999989px;top:393.2px;width:300px;text-align:right;color:#000;font-size:13.6px;transform-origin:100% 0;transform:scaleX(0.9277);">2</div>
<div class="t" style="left:43.19999999999999px;top:393.2px;width:300px;text-align:right;color:#000;font-size:13.6px;transform-origin:100% 0;transform:scaleX(0.9599);">3.2</div>
<div style="left:378px;top:400px;width:3px;height:2px;background:#505050;"></div>
<div style="left:382px;top:400px;width:2px;height:2px;background:#505050;"></div>
<div style="left:440px;top:400px;width:3px;height:2px;background:#505050;"></div>
<div style="left:444px;top:400px;width:2px;height:2px;background:#505050;"></div>
<div class="t" style="left:456.60px;top:393.2px;color:#000;font-size:13.6px;transform-origin:0 0;transform:scaleX(0.8991);">Auto Detach</div>
<div style="left:596px;top:400px;width:3px;height:2px;background:#505050;"></div>
<div style="left:600px;top:400px;width:2px;height:2px;background:#505050;"></div>
<div class="t" style="left:612.60px;top:393.2px;color:#000;font-size:13.6px;transform-origin:0 0;transform:scaleX(0.8991);">Auto Detach</div>
<div style="left:751px;top:400px;width:3px;height:2px;background:#505050;"></div>
<div style="left:755px;top:400px;width:2px;height:2px;background:#505050;"></div>
<div style="left:768px;top:400px;width:3px;height:2px;background:#505050;"></div>
<div style="left:772px;top:400px;width:2px;height:2px;background:#505050;"></div>
<div style="left:891px;top:400px;width:3px;height:2px;background:#505050;"></div>
<div style="left:895px;top:400px;width:2px;height:2px;background:#505050;"></div>
<div style="left:8px;top:413px;width:899px;height:20px;background:#f6f6f6;"></div>
<div style="left:45px;top:413px;width:1px;height:20px;background:#e4e4e4;"></div>
<div style="left:77px;top:413px;width:1px;height:20px;background:#e4e4e4;"></div>
<div style="left:115px;top:413px;width:1px;height:20px;background:#e4e4e4;"></div>
<div style="left:147px;top:413px;width:1px;height:20px;background:#e4e4e4;"></div>
<div style="left:222px;top:413px;width:1px;height:20px;background:#e4e4e4;"></div>
<div style="left:267px;top:413px;width:1px;height:20px;background:#e4e4e4;"></div>
<div style="left:314px;top:413px;width:1px;height:20px;background:#e4e4e4;"></div>
<div style="left:348px;top:413px;width:1px;height:20px;background:#e4e4e4;"></div>
<div style="left:389px;top:413px;width:1px;height:20px;background:#e4e4e4;"></div>
<div style="left:451px;top:413px;width:1px;height:20px;background:#e4e4e4;"></div>
<div style="left:544px;top:413px;width:1px;height:20px;background:#e4e4e4;"></div>
<div style="left:607px;top:413px;width:1px;height:20px;background:#e4e4e4;"></div>
<div style="left:698px;top:413px;width:1px;height:20px;background:#e4e4e4;"></div>
<div style="left:762px;top:413px;width:1px;height:20px;background:#e4e4e4;"></div>
<div style="left:840px;top:413px;width:1px;height:20px;background:#e4e4e4;"></div>
<div style="left:902px;top:413px;width:1px;height:20px;background:#e4e4e4;"></div>
<div class="t" style="left:-259.8px;top:414.7px;width:300px;text-align:right;color:#000;font-size:13.6px;transform-origin:100% 0;transform:scaleX(0.9277);">4</div>
<div class="t" style="left:-227.8px;top:414.7px;width:300px;text-align:right;color:#000;font-size:13.6px;transform-origin:100% 0;transform:scaleX(0.9277);">1</div>
<div class="t" style="left:-189.8px;top:414.7px;width:300px;text-align:right;color:#000;font-size:13.6px;transform-origin:100% 0;transform:scaleX(0.9277);">565</div>
<div class="t" style="left:-157.8px;top:414.7px;width:300px;text-align:right;color:#000;font-size:13.6px;transform-origin:100% 0;transform:scaleX(0.9277);">44</div>
<div class="t" style="left:-82.80000000000001px;top:414.7px;width:300px;text-align:right;color:#000;font-size:13.6px;transform-origin:100% 0;transform:scaleX(0.9687);">20/03/2023</div>
<div class="t" style="left:-37.80000000000001px;top:414.7px;width:300px;text-align:right;color:#000;font-size:13.6px;transform-origin:100% 0;transform:scaleX(0.9277);">19298</div>
<div class="t" style="left:9.199999999999989px;top:414.7px;width:300px;text-align:right;color:#000;font-size:13.6px;transform-origin:100% 0;transform:scaleX(0.9277);">2</div>
<div class="t" style="left:43.19999999999999px;top:414.7px;width:300px;text-align:right;color:#000;font-size:13.6px;transform-origin:100% 0;transform:scaleX(0.9599);">0.2</div>
<div style="left:378px;top:422px;width:3px;height:2px;background:#505050;"></div>
<div style="left:382px;top:422px;width:2px;height:2px;background:#505050;"></div>
<div style="left:440px;top:422px;width:3px;height:2px;background:#505050;"></div>
<div style="left:444px;top:422px;width:2px;height:2px;background:#505050;"></div>
<div class="t" style="left:456.60px;top:414.7px;color:#000;font-size:13.6px;transform-origin:0 0;transform:scaleX(0.8976);">Manual Detach</div>
<div style="left:596px;top:422px;width:3px;height:2px;background:#505050;"></div>
<div style="left:600px;top:422px;width:2px;height:2px;background:#505050;"></div>
<div class="t" style="left:612.60px;top:414.7px;color:#000;font-size:13.6px;transform-origin:0 0;transform:scaleX(0.8976);">Manual Detach</div>
<div style="left:751px;top:422px;width:3px;height:2px;background:#505050;"></div>
<div style="left:755px;top:422px;width:2px;height:2px;background:#505050;"></div>
<div style="left:768px;top:422px;width:3px;height:2px;background:#505050;"></div>
<div style="left:772px;top:422px;width:2px;height:2px;background:#505050;"></div>
<div style="left:891px;top:422px;width:3px;height:2px;background:#505050;"></div>
<div style="left:895px;top:422px;width:2px;height:2px;background:#505050;"></div>
<div style="left:45px;top:434px;width:1px;height:20px;background:#e4e4e4;"></div>
<div style="left:77px;top:434px;width:1px;height:20px;background:#e4e4e4;"></div>
<div style="left:115px;top:434px;width:1px;height:20px;background:#e4e4e4;"></div>
<div style="left:147px;top:434px;width:1px;height:20px;background:#e4e4e4;"></div>
<div style="left:222px;top:434px;width:1px;height:20px;background:#e4e4e4;"></div>
<div style="left:267px;top:434px;width:1px;height:20px;background:#e4e4e4;"></div>
<div style="left:314px;top:434px;width:1px;height:20px;background:#e4e4e4;"></div>
<div style="left:348px;top:434px;width:1px;height:20px;background:#e4e4e4;"></div>
<div style="left:389px;top:434px;width:1px;height:20px;background:#e4e4e4;"></div>
<div style="left:451px;top:434px;width:1px;height:20px;background:#e4e4e4;"></div>
<div style="left:544px;top:434px;width:1px;height:20px;background:#e4e4e4;"></div>
<div style="left:607px;top:434px;width:1px;height:20px;background:#e4e4e4;"></div>
<div style="left:698px;top:434px;width:1px;height:20px;background:#e4e4e4;"></div>
<div style="left:762px;top:434px;width:1px;height:20px;background:#e4e4e4;"></div>
<div style="left:840px;top:434px;width:1px;height:20px;background:#e4e4e4;"></div>
<div style="left:902px;top:434px;width:1px;height:20px;background:#e4e4e4;"></div>
<div class="t" style="left:-259.8px;top:435.7px;width:300px;text-align:right;color:#000;font-size:13.6px;transform-origin:100% 0;transform:scaleX(0.9277);">5</div>
<div class="t" style="left:-227.8px;top:435.7px;width:300px;text-align:right;color:#000;font-size:13.6px;transform-origin:100% 0;transform:scaleX(0.9277);">1</div>
<div class="t" style="left:-189.8px;top:435.7px;width:300px;text-align:right;color:#000;font-size:13.6px;transform-origin:100% 0;transform:scaleX(0.9277);">605</div>
<div class="t" style="left:-157.8px;top:435.7px;width:300px;text-align:right;color:#000;font-size:13.6px;transform-origin:100% 0;transform:scaleX(0.9277);">24</div>
<div class="t" style="left:-82.80000000000001px;top:435.7px;width:300px;text-align:right;color:#000;font-size:13.6px;transform-origin:100% 0;transform:scaleX(0.9687);">20/03/2023</div>
<div class="t" style="left:-37.80000000000001px;top:435.7px;width:300px;text-align:right;color:#000;font-size:13.6px;transform-origin:100% 0;transform:scaleX(0.9277);">16048</div>
<div class="t" style="left:9.199999999999989px;top:435.7px;width:300px;text-align:right;color:#000;font-size:13.6px;transform-origin:100% 0;transform:scaleX(0.9277);">2</div>
<div class="t" style="left:43.19999999999999px;top:435.7px;width:300px;text-align:right;color:#000;font-size:13.6px;transform-origin:100% 0;transform:scaleX(0.9599);">3.3</div>
<div class="t" style="left:84.19999999999999px;top:435.7px;width:300px;text-align:right;color:#000;font-size:13.6px;transform-origin:100% 0;transform:scaleX(0.9599);">3.0</div>
<div style="left:440px;top:443px;width:3px;height:2px;background:#505050;"></div>
<div style="left:444px;top:443px;width:2px;height:2px;background:#505050;"></div>
<div class="t" style="left:456.60px;top:435.7px;color:#000;font-size:13.6px;transform-origin:0 0;transform:scaleX(0.8991);">Auto Detach</div>
<div class="t" style="left:302.20000000000005px;top:435.7px;width:300px;text-align:right;color:#000;font-size:13.6px;transform-origin:100% 0;transform:scaleX(0.9599);">2.7</div>
<div class="t" style="left:612.60px;top:435.7px;color:#000;font-size:13.6px;transform-origin:0 0;transform:scaleX(0.8991);">Auto Detach</div>
<div class="t" style="left:457.20000000000005px;top:435.7px;width:300px;text-align:right;color:#000;font-size:13.6px;transform-origin:100% 0;transform:scaleX(0.9599);">0.2</div>
<div style="left:768px;top:443px;width:3px;height:2px;background:#505050;"></div>
<div style="left:772px;top:443px;width:2px;height:2px;background:#505050;"></div>
<div style="left:891px;top:443px;width:3px;height:2px;background:#505050;"></div>
<div style="left:895px;top:443px;width:2px;height:2px;background:#505050;"></div>
<div style="left:8px;top:455px;width:899px;height:20px;background:#f6f6f6;"></div>
<div style="left:45px;top:455px;width:1px;height:20px;background:#e4e4e4;"></div>
<div style="left:77px;top:455px;width:1px;height:20px;background:#e4e4e4;"></div>
<div style="left:115px;top:455px;width:1px;height:20px;background:#e4e4e4;"></div>
<div style="left:147px;top:455px;width:1px;height:20px;background:#e4e4e4;"></div>
<div style="left:222px;top:455px;width:1px;height:20px;background:#e4e4e4;"></div>
<div style="left:267px;top:455px;width:1px;height:20px;background:#e4e4e4;"></div>
<div style="left:314px;top:455px;width:1px;height:20px;background:#e4e4e4;"></div>
<div style="left:348px;top:455px;width:1px;height:20px;background:#e4e4e4;"></div>
<div style="left:389px;top:455px;width:1px;height:20px;background:#e4e4e4;"></div>
<div style="left:451px;top:455px;width:1px;height:20px;background:#e4e4e4;"></div>
<div style="left:544px;top:455px;width:1px;height:20px;background:#e4e4e4;"></div>
<div style="left:607px;top:455px;width:1px;height:20px;background:#e4e4e4;"></div>
<div style="left:698px;top:455px;width:1px;height:20px;background:#e4e4e4;"></div>
<div style="left:762px;top:455px;width:1px;height:20px;background:#e4e4e4;"></div>
<div style="left:840px;top:455px;width:1px;height:20px;background:#e4e4e4;"></div>
<div style="left:902px;top:455px;width:1px;height:20px;background:#e4e4e4;"></div>
<div class="t" style="left:-259.8px;top:456.7px;width:300px;text-align:right;color:#000;font-size:13.6px;transform-origin:100% 0;transform:scaleX(0.9277);">6</div>
<div class="t" style="left:-227.8px;top:456.7px;width:300px;text-align:right;color:#000;font-size:13.6px;transform-origin:100% 0;transform:scaleX(0.9277);">1</div>
<div class="t" style="left:-189.8px;top:456.7px;width:300px;text-align:right;color:#000;font-size:13.6px;transform-origin:100% 0;transform:scaleX(0.9277);">672</div>
<div class="t" style="left:-157.8px;top:456.7px;width:300px;text-align:right;color:#000;font-size:13.6px;transform-origin:100% 0;transform:scaleX(0.9277);">31</div>
<div class="t" style="left:-82.80000000000001px;top:456.7px;width:300px;text-align:right;color:#000;font-size:13.6px;transform-origin:100% 0;transform:scaleX(0.9687);">20/03/2023</div>
<div class="t" style="left:-37.80000000000001px;top:456.7px;width:300px;text-align:right;color:#000;font-size:13.6px;transform-origin:100% 0;transform:scaleX(0.9277);">17382</div>
<div class="t" style="left:9.199999999999989px;top:456.7px;width:300px;text-align:right;color:#000;font-size:13.6px;transform-origin:100% 0;transform:scaleX(0.9277);">2</div>
<div style="left:337px;top:464px;width:3px;height:2px;background:#505050;"></div>
<div style="left:341px;top:464px;width:2px;height:2px;background:#505050;"></div>
<div style="left:378px;top:464px;width:3px;height:2px;background:#505050;"></div>
<div style="left:382px;top:464px;width:2px;height:2px;background:#505050;"></div>
<div style="left:440px;top:464px;width:3px;height:2px;background:#505050;"></div>
<div style="left:444px;top:464px;width:2px;height:2px;background:#505050;"></div>
<div class="t" style="left:456.60px;top:456.7px;color:#000;font-size:13.6px;transform-origin:0 0;transform:scaleX(0.8976);">Manual Detach</div>
<div style="left:596px;top:464px;width:3px;height:2px;background:#505050;"></div>
<div style="left:600px;top:464px;width:2px;height:2px;background:#505050;"></div>
<div class="t" style="left:612.60px;top:456.7px;color:#000;font-size:13.6px;transform-origin:0 0;transform:scaleX(0.8976);">Manual Detach</div>
<div style="left:751px;top:464px;width:3px;height:2px;background:#505050;"></div>
<div style="left:755px;top:464px;width:2px;height:2px;background:#505050;"></div>
<div style="left:768px;top:464px;width:3px;height:2px;background:#505050;"></div>
<div style="left:772px;top:464px;width:2px;height:2px;background:#505050;"></div>
<div style="left:891px;top:464px;width:3px;height:2px;background:#505050;"></div>
<div style="left:895px;top:464px;width:2px;height:2px;background:#505050;"></div>
<div style="left:45px;top:476px;width:1px;height:20px;background:#e4e4e4;"></div>
<div style="left:77px;top:476px;width:1px;height:20px;background:#e4e4e4;"></div>
<div style="left:115px;top:476px;width:1px;height:20px;background:#e4e4e4;"></div>
<div style="left:147px;top:476px;width:1px;height:20px;background:#e4e4e4;"></div>
<div style="left:222px;top:476px;width:1px;height:20px;background:#e4e4e4;"></div>
<div style="left:267px;top:476px;width:1px;height:20px;background:#e4e4e4;"></div>
<div style="left:314px;top:476px;width:1px;height:20px;background:#e4e4e4;"></div>
<div style="left:348px;top:476px;width:1px;height:20px;background:#e4e4e4;"></div>
<div style="left:389px;top:476px;width:1px;height:20px;background:#e4e4e4;"></div>
<div style="left:451px;top:476px;width:1px;height:20px;background:#e4e4e4;"></div>
<div style="left:544px;top:476px;width:1px;height:20px;background:#e4e4e4;"></div>
<div style="left:607px;top:476px;width:1px;height:20px;background:#e4e4e4;"></div>
<div style="left:698px;top:476px;width:1px;height:20px;background:#e4e4e4;"></div>
<div style="left:762px;top:476px;width:1px;height:20px;background:#e4e4e4;"></div>
<div style="left:840px;top:476px;width:1px;height:20px;background:#e4e4e4;"></div>
<div style="left:902px;top:476px;width:1px;height:20px;background:#e4e4e4;"></div>
<div class="t" style="left:-259.8px;top:477.7px;width:300px;text-align:right;color:#000;font-size:13.6px;transform-origin:100% 0;transform:scaleX(0.9277);">7</div>
<div class="t" style="left:-227.8px;top:477.7px;width:300px;text-align:right;color:#000;font-size:13.6px;transform-origin:100% 0;transform:scaleX(0.9277);">1</div>
<div class="t" style="left:-189.8px;top:477.7px;width:300px;text-align:right;color:#000;font-size:13.6px;transform-origin:100% 0;transform:scaleX(0.9277);">702</div>
<div class="t" style="left:-157.8px;top:477.7px;width:300px;text-align:right;color:#000;font-size:13.6px;transform-origin:100% 0;transform:scaleX(0.9277);">2</div>
<div class="t" style="left:-82.80000000000001px;top:477.7px;width:300px;text-align:right;color:#000;font-size:13.6px;transform-origin:100% 0;transform:scaleX(0.9687);">20/03/2023</div>
<div class="t" style="left:-37.80000000000001px;top:477.7px;width:300px;text-align:right;color:#000;font-size:13.6px;transform-origin:100% 0;transform:scaleX(0.9277);">14329</div>
<div class="t" style="left:9.199999999999989px;top:477.7px;width:300px;text-align:right;color:#000;font-size:13.6px;transform-origin:100% 0;transform:scaleX(0.9277);">2</div>
<div class="t" style="left:43.19999999999999px;top:477.7px;width:300px;text-align:right;color:#000;font-size:13.6px;transform-origin:100% 0;transform:scaleX(0.9599);">4.0</div>
<div class="t" style="left:84.19999999999999px;top:477.7px;width:300px;text-align:right;color:#000;font-size:13.6px;transform-origin:100% 0;transform:scaleX(0.9599);">6.7</div>
<div style="left:440px;top:485px;width:3px;height:2px;background:#505050;"></div>
<div style="left:444px;top:485px;width:2px;height:2px;background:#505050;"></div>
<div class="t" style="left:456.60px;top:477.7px;color:#000;font-size:13.6px;transform-origin:0 0;transform:scaleX(0.8991);">Auto Detach</div>
<div class="t" style="left:302.20000000000005px;top:477.7px;width:300px;text-align:right;color:#000;font-size:13.6px;transform-origin:100% 0;transform:scaleX(0.9599);">6.2</div>
<div class="t" style="left:612.60px;top:477.7px;color:#000;font-size:13.6px;transform-origin:0 0;transform:scaleX(0.8991);">Auto Detach</div>
<div class="t" style="left:457.20000000000005px;top:477.7px;width:300px;text-align:right;color:#000;font-size:13.6px;transform-origin:100% 0;transform:scaleX(0.9599);">0.4</div>
<div style="left:768px;top:485px;width:3px;height:2px;background:#505050;"></div>
<div style="left:772px;top:485px;width:2px;height:2px;background:#505050;"></div>
<div style="left:891px;top:485px;width:3px;height:2px;background:#505050;"></div>
<div style="left:895px;top:485px;width:2px;height:2px;background:#505050;"></div>
<div style="left:8px;top:497px;width:899px;height:21px;background:#f6f6f6;"></div>
<div style="left:45px;top:497px;width:1px;height:21px;background:#e4e4e4;"></div>
<div style="left:77px;top:497px;width:1px;height:21px;background:#e4e4e4;"></div>
<div style="left:115px;top:497px;width:1px;height:21px;background:#e4e4e4;"></div>
<div style="left:147px;top:497px;width:1px;height:21px;background:#e4e4e4;"></div>
<div style="left:222px;top:497px;width:1px;height:21px;background:#e4e4e4;"></div>
<div style="left:267px;top:497px;width:1px;height:21px;background:#e4e4e4;"></div>
<div style="left:314px;top:497px;width:1px;height:21px;background:#e4e4e4;"></div>
<div style="left:348px;top:497px;width:1px;height:21px;background:#e4e4e4;"></div>
<div style="left:389px;top:497px;width:1px;height:21px;background:#e4e4e4;"></div>
<div style="left:451px;top:497px;width:1px;height:21px;background:#e4e4e4;"></div>
<div style="left:544px;top:497px;width:1px;height:21px;background:#e4e4e4;"></div>
<div style="left:607px;top:497px;width:1px;height:21px;background:#e4e4e4;"></div>
<div style="left:698px;top:497px;width:1px;height:21px;background:#e4e4e4;"></div>
<div style="left:762px;top:497px;width:1px;height:21px;background:#e4e4e4;"></div>
<div style="left:840px;top:497px;width:1px;height:21px;background:#e4e4e4;"></div>
<div style="left:902px;top:497px;width:1px;height:21px;background:#e4e4e4;"></div>
<div class="t" style="left:-259.8px;top:499.2px;width:300px;text-align:right;color:#000;font-size:13.6px;transform-origin:100% 0;transform:scaleX(0.9277);">8</div>
<div class="t" style="left:-227.8px;top:499.2px;width:300px;text-align:right;color:#000;font-size:13.6px;transform-origin:100% 0;transform:scaleX(0.9277);">1</div>
<div class="t" style="left:-189.8px;top:499.2px;width:300px;text-align:right;color:#000;font-size:13.6px;transform-origin:100% 0;transform:scaleX(0.9277);">714</div>
<div class="t" style="left:-157.8px;top:499.2px;width:300px;text-align:right;color:#000;font-size:13.6px;transform-origin:100% 0;transform:scaleX(0.9277);">15</div>
<div class="t" style="left:-82.80000000000001px;top:499.2px;width:300px;text-align:right;color:#000;font-size:13.6px;transform-origin:100% 0;transform:scaleX(0.9687);">20/03/2023</div>
<div class="t" style="left:-37.80000000000001px;top:499.2px;width:300px;text-align:right;color:#000;font-size:13.6px;transform-origin:100% 0;transform:scaleX(0.9277);">16124</div>
<div class="t" style="left:9.199999999999989px;top:499.2px;width:300px;text-align:right;color:#000;font-size:13.6px;transform-origin:100% 0;transform:scaleX(0.9277);">2</div>
<div class="t" style="left:43.19999999999999px;top:499.2px;width:300px;text-align:right;color:#000;font-size:13.6px;transform-origin:100% 0;transform:scaleX(0.9599);">0.2</div>
<div style="left:378px;top:506px;width:3px;height:2px;background:#505050;"></div>
<div style="left:382px;top:506px;width:2px;height:2px;background:#505050;"></div>
<div style="left:440px;top:506px;width:3px;height:2px;background:#505050;"></div>
<div style="left:444px;top:506px;width:2px;height:2px;background:#505050;"></div>
<div class="t" style="left:456.60px;top:499.2px;color:#000;font-size:13.6px;transform-origin:0 0;transform:scaleX(0.8976);">Manual Detach</div>
<div style="left:596px;top:506px;width:3px;height:2px;background:#505050;"></div>
<div style="left:600px;top:506px;width:2px;height:2px;background:#505050;"></div>
<div class="t" style="left:612.60px;top:499.2px;color:#000;font-size:13.6px;transform-origin:0 0;transform:scaleX(0.8976);">Manual Detach</div>
<div style="left:751px;top:506px;width:3px;height:2px;background:#505050;"></div>
<div style="left:755px;top:506px;width:2px;height:2px;background:#505050;"></div>
<div style="left:768px;top:506px;width:3px;height:2px;background:#505050;"></div>
<div style="left:772px;top:506px;width:2px;height:2px;background:#505050;"></div>
<div style="left:891px;top:506px;width:3px;height:2px;background:#505050;"></div>
<div style="left:895px;top:506px;width:2px;height:2px;background:#505050;"></div>
<div style="left:45px;top:519px;width:1px;height:20px;background:#e4e4e4;"></div>
<div style="left:77px;top:519px;width:1px;height:20px;background:#e4e4e4;"></div>
<div style="left:115px;top:519px;width:1px;height:20px;background:#e4e4e4;"></div>
<div style="left:147px;top:519px;width:1px;height:20px;background:#e4e4e4;"></div>
<div style="left:222px;top:519px;width:1px;height:20px;background:#e4e4e4;"></div>
<div style="left:267px;top:519px;width:1px;height:20px;background:#e4e4e4;"></div>
<div style="left:314px;top:519px;width:1px;height:20px;background:#e4e4e4;"></div>
<div style="left:348px;top:519px;width:1px;height:20px;background:#e4e4e4;"></div>
<div style="left:389px;top:519px;width:1px;height:20px;background:#e4e4e4;"></div>
<div style="left:451px;top:519px;width:1px;height:20px;background:#e4e4e4;"></div>
<div style="left:544px;top:519px;width:1px;height:20px;background:#e4e4e4;"></div>
<div style="left:607px;top:519px;width:1px;height:20px;background:#e4e4e4;"></div>
<div style="left:698px;top:519px;width:1px;height:20px;background:#e4e4e4;"></div>
<div style="left:762px;top:519px;width:1px;height:20px;background:#e4e4e4;"></div>
<div style="left:840px;top:519px;width:1px;height:20px;background:#e4e4e4;"></div>
<div style="left:902px;top:519px;width:1px;height:20px;background:#e4e4e4;"></div>
<div class="t" style="left:-259.8px;top:520.7px;width:300px;text-align:right;color:#000;font-size:13.6px;transform-origin:100% 0;transform:scaleX(0.9277);">9</div>
<div class="t" style="left:-227.8px;top:520.7px;width:300px;text-align:right;color:#000;font-size:13.6px;transform-origin:100% 0;transform:scaleX(0.9277);">1</div>
<div class="t" style="left:-189.8px;top:520.7px;width:300px;text-align:right;color:#000;font-size:13.6px;transform-origin:100% 0;transform:scaleX(0.9277);">718</div>
<div class="t" style="left:-157.8px;top:520.7px;width:300px;text-align:right;color:#000;font-size:13.6px;transform-origin:100% 0;transform:scaleX(0.9277);">19</div>
<div class="t" style="left:-82.80000000000001px;top:520.7px;width:300px;text-align:right;color:#000;font-size:13.6px;transform-origin:100% 0;transform:scaleX(0.9687);">20/03/2023</div>
<div class="t" style="left:-37.80000000000001px;top:520.7px;width:300px;text-align:right;color:#000;font-size:13.6px;transform-origin:100% 0;transform:scaleX(0.9277);">18446</div>
<div class="t" style="left:9.199999999999989px;top:520.7px;width:300px;text-align:right;color:#000;font-size:13.6px;transform-origin:100% 0;transform:scaleX(0.9277);">2</div>
<div style="left:337px;top:528px;width:3px;height:2px;background:#505050;"></div>
<div style="left:341px;top:528px;width:2px;height:2px;background:#505050;"></div>
<div style="left:378px;top:528px;width:3px;height:2px;background:#505050;"></div>
<div style="left:382px;top:528px;width:2px;height:2px;background:#505050;"></div>
<div style="left:440px;top:528px;width:3px;height:2px;background:#505050;"></div>
<div style="left:444px;top:528px;width:2px;height:2px;background:#505050;"></div>
<div class="t" style="left:456.60px;top:520.7px;color:#000;font-size:13.6px;transform-origin:0 0;transform:scaleX(0.8976);">Manual Detach</div>
<div style="left:596px;top:528px;width:3px;height:2px;background:#505050;"></div>
<div style="left:600px;top:528px;width:2px;height:2px;background:#505050;"></div>
<div class="t" style="left:612.60px;top:520.7px;color:#000;font-size:13.6px;transform-origin:0 0;transform:scaleX(0.8976);">Manual Detach</div>
<div style="left:751px;top:528px;width:3px;height:2px;background:#505050;"></div>
<div style="left:755px;top:528px;width:2px;height:2px;background:#505050;"></div>
<div style="left:768px;top:528px;width:3px;height:2px;background:#505050;"></div>
<div style="left:772px;top:528px;width:2px;height:2px;background:#505050;"></div>
<div style="left:891px;top:528px;width:3px;height:2px;background:#505050;"></div>
<div style="left:895px;top:528px;width:2px;height:2px;background:#505050;"></div>
<div style="left:8px;top:540px;width:899px;height:20px;background:#f6f6f6;"></div>
<div style="left:45px;top:540px;width:1px;height:20px;background:#e4e4e4;"></div>
<div style="left:77px;top:540px;width:1px;height:20px;background:#e4e4e4;"></div>
<div style="left:115px;top:540px;width:1px;height:20px;background:#e4e4e4;"></div>
<div style="left:147px;top:540px;width:1px;height:20px;background:#e4e4e4;"></div>
<div style="left:222px;top:540px;width:1px;height:20px;background:#e4e4e4;"></div>
<div style="left:267px;top:540px;width:1px;height:20px;background:#e4e4e4;"></div>
<div style="left:314px;top:540px;width:1px;height:20px;background:#e4e4e4;"></div>
<div style="left:348px;top:540px;width:1px;height:20px;background:#e4e4e4;"></div>
<div style="left:389px;top:540px;width:1px;height:20px;background:#e4e4e4;"></div>
<div style="left:451px;top:540px;width:1px;height:20px;background:#e4e4e4;"></div>
<div style="left:544px;top:540px;width:1px;height:20px;background:#e4e4e4;"></div>
<div style="left:607px;top:540px;width:1px;height:20px;background:#e4e4e4;"></div>
<div style="left:698px;top:540px;width:1px;height:20px;background:#e4e4e4;"></div>
<div style="left:762px;top:540px;width:1px;height:20px;background:#e4e4e4;"></div>
<div style="left:840px;top:540px;width:1px;height:20px;background:#e4e4e4;"></div>
<div style="left:902px;top:540px;width:1px;height:20px;background:#e4e4e4;"></div>
<div class="t" style="left:-259.8px;top:541.7px;width:300px;text-align:right;color:#000;font-size:13.6px;transform-origin:100% 0;transform:scaleX(0.9277);">10</div>
<div class="t" style="left:-227.8px;top:541.7px;width:300px;text-align:right;color:#000;font-size:13.6px;transform-origin:100% 0;transform:scaleX(0.9277);">1</div>
<div class="t" style="left:-189.8px;top:541.7px;width:300px;text-align:right;color:#000;font-size:13.6px;transform-origin:100% 0;transform:scaleX(0.9277);">735</div>
<div class="t" style="left:-157.8px;top:541.7px;width:300px;text-align:right;color:#000;font-size:13.6px;transform-origin:100% 0;transform:scaleX(0.9277);">36</div>
<div class="t" style="left:-82.80000000000001px;top:541.7px;width:300px;text-align:right;color:#000;font-size:13.6px;transform-origin:100% 0;transform:scaleX(0.9687);">20/03/2023</div>
<div class="t" style="left:-37.80000000000001px;top:541.7px;width:300px;text-align:right;color:#000;font-size:13.6px;transform-origin:100% 0;transform:scaleX(0.9277);">19374</div>
<div class="t" style="left:9.199999999999989px;top:541.7px;width:300px;text-align:right;color:#000;font-size:13.6px;transform-origin:100% 0;transform:scaleX(0.9277);">2</div>
<div class="t" style="left:43.19999999999999px;top:541.7px;width:300px;text-align:right;color:#000;font-size:13.6px;transform-origin:100% 0;transform:scaleX(0.9599);">0.3</div>
<div style="left:378px;top:549px;width:3px;height:2px;background:#505050;"></div>
<div style="left:382px;top:549px;width:2px;height:2px;background:#505050;"></div>
<div style="left:440px;top:549px;width:3px;height:2px;background:#505050;"></div>
<div style="left:444px;top:549px;width:2px;height:2px;background:#505050;"></div>
<div class="t" style="left:456.60px;top:541.7px;color:#000;font-size:13.6px;transform-origin:0 0;transform:scaleX(0.8976);">Manual Detach</div>
<div style="left:596px;top:549px;width:3px;height:2px;background:#505050;"></div>
<div style="left:600px;top:549px;width:2px;height:2px;background:#505050;"></div>
<div class="t" style="left:612.60px;top:541.7px;color:#000;font-size:13.6px;transform-origin:0 0;transform:scaleX(0.8976);">Manual Detach</div>
<div style="left:751px;top:549px;width:3px;height:2px;background:#505050;"></div>
<div style="left:755px;top:549px;width:2px;height:2px;background:#505050;"></div>
<div style="left:768px;top:549px;width:3px;height:2px;background:#505050;"></div>
<div style="left:772px;top:549px;width:2px;height:2px;background:#505050;"></div>
<div style="left:891px;top:549px;width:3px;height:2px;background:#505050;"></div>
<div style="left:895px;top:549px;width:2px;height:2px;background:#505050;"></div>
<div style="left:45px;top:561px;width:1px;height:21px;background:#e4e4e4;"></div>
<div style="left:77px;top:561px;width:1px;height:21px;background:#e4e4e4;"></div>
<div style="left:115px;top:561px;width:1px;height:21px;background:#e4e4e4;"></div>
<div style="left:147px;top:561px;width:1px;height:21px;background:#e4e4e4;"></div>
<div style="left:222px;top:561px;width:1px;height:21px;background:#e4e4e4;"></div>
<div style="left:267px;top:561px;width:1px;height:21px;background:#e4e4e4;"></div>
<div style="left:314px;top:561px;width:1px;height:21px;background:#e4e4e4;"></div>
<div style="left:348px;top:561px;width:1px;height:21px;background:#e4e4e4;"></div>
<div style="left:389px;top:561px;width:1px;height:21px;background:#e4e4e4;"></div>
<div style="left:451px;top:561px;width:1px;height:21px;background:#e4e4e4;"></div>
<div style="left:544px;top:561px;width:1px;height:21px;background:#e4e4e4;"></div>
<div style="left:607px;top:561px;width:1px;height:21px;background:#e4e4e4;"></div>
<div style="left:698px;top:561px;width:1px;height:21px;background:#e4e4e4;"></div>
<div style="left:762px;top:561px;width:1px;height:21px;background:#e4e4e4;"></div>
<div style="left:840px;top:561px;width:1px;height:21px;background:#e4e4e4;"></div>
<div style="left:902px;top:561px;width:1px;height:21px;background:#e4e4e4;"></div>
<div class="t" style="left:-259.8px;top:563.2px;width:300px;text-align:right;color:#000;font-size:13.6px;transform-origin:100% 0;transform:scaleX(0.9940);">11</div>
<div class="t" style="left:-227.8px;top:563.2px;width:300px;text-align:right;color:#000;font-size:13.6px;transform-origin:100% 0;transform:scaleX(0.9277);">1</div>
<div class="t" style="left:-189.8px;top:563.2px;width:300px;text-align:right;color:#000;font-size:13.6px;transform-origin:100% 0;transform:scaleX(0.9277);">740</div>
<div class="t" style="left:-157.8px;top:563.2px;width:300px;text-align:right;color:#000;font-size:13.6px;transform-origin:100% 0;transform:scaleX(0.9277);">41</div>
<div class="t" style="left:-82.80000000000001px;top:563.2px;width:300px;text-align:right;color:#000;font-size:13.6px;transform-origin:100% 0;transform:scaleX(0.9687);">20/03/2023</div>
<div class="t" style="left:-37.80000000000001px;top:563.2px;width:300px;text-align:right;color:#000;font-size:13.6px;transform-origin:100% 0;transform:scaleX(0.9277);">17018</div>
<div class="t" style="left:9.199999999999989px;top:563.2px;width:300px;text-align:right;color:#000;font-size:13.6px;transform-origin:100% 0;transform:scaleX(0.9277);">2</div>
<div class="t" style="left:43.19999999999999px;top:563.2px;width:300px;text-align:right;color:#000;font-size:13.6px;transform-origin:100% 0;transform:scaleX(0.9599);">5.5</div>
<div class="t" style="left:84.19999999999999px;top:563.2px;width:300px;text-align:right;color:#000;font-size:13.6px;transform-origin:100% 0;transform:scaleX(0.9507);">13.8</div>
<div style="left:440px;top:570px;width:3px;height:2px;background:#505050;"></div>
<div style="left:444px;top:570px;width:2px;height:2px;background:#505050;"></div>
<div class="t" style="left:456.60px;top:563.2px;color:#000;font-size:13.6px;transform-origin:0 0;transform:scaleX(0.8991);">Auto Detach</div>
<div class="t" style="left:302.20000000000005px;top:563.2px;width:300px;text-align:right;color:#000;font-size:13.6px;transform-origin:100% 0;transform:scaleX(0.9507);">13.5</div>
<div class="t" style="left:612.60px;top:563.2px;color:#000;font-size:13.6px;transform-origin:0 0;transform:scaleX(0.8991);">Auto Detach</div>
<div class="t" style="left:457.20000000000005px;top:563.2px;width:300px;text-align:right;color:#000;font-size:13.6px;transform-origin:100% 0;transform:scaleX(0.9599);">0.2</div>
<div style="left:768px;top:570px;width:3px;height:2px;background:#505050;"></div>
<div style="left:772px;top:570px;width:2px;height:2px;background:#505050;"></div>
<div style="left:891px;top:570px;width:3px;height:2px;background:#505050;"></div>
<div style="left:895px;top:570px;width:2px;height:2px;background:#505050;"></div>
<div style="left:8px;top:583px;width:899px;height:20px;background:#f6f6f6;"></div>
<div style="left:45px;top:583px;width:1px;height:20px;background:#e4e4e4;"></div>
<div style="left:77px;top:583px;width:1px;height:20px;background:#e4e4e4;"></div>
<div style="left:115px;top:583px;width:1px;height:20px;background:#e4e4e4;"></div>
<div style="left:147px;top:583px;width:1px;height:20px;background:#e4e4e4;"></div>
<div style="left:222px;top:583px;width:1px;height:20px;background:#e4e4e4;"></div>
<div style="left:267px;top:583px;width:1px;height:20px;background:#e4e4e4;"></div>
<div style="left:314px;top:583px;width:1px;height:20px;background:#e4e4e4;"></div>
<div style="left:348px;top:583px;width:1px;height:20px;background:#e4e4e4;"></div>
<div style="left:389px;top:583px;width:1px;height:20px;background:#e4e4e4;"></div>
<div style="left:451px;top:583px;width:1px;height:20px;background:#e4e4e4;"></div>
<div style="left:544px;top:583px;width:1px;height:20px;background:#e4e4e4;"></div>
<div style="left:607px;top:583px;width:1px;height:20px;background:#e4e4e4;"></div>
<div style="left:698px;top:583px;width:1px;height:20px;background:#e4e4e4;"></div>
<div style="left:762px;top:583px;width:1px;height:20px;background:#e4e4e4;"></div>
<div style="left:840px;top:583px;width:1px;height:20px;background:#e4e4e4;"></div>
<div style="left:902px;top:583px;width:1px;height:20px;background:#e4e4e4;"></div>
<div class="t" style="left:-259.8px;top:584.7px;width:300px;text-align:right;color:#000;font-size:13.6px;transform-origin:100% 0;transform:scaleX(0.9277);">12</div>
<div class="t" style="left:-227.8px;top:584.7px;width:300px;text-align:right;color:#000;font-size:13.6px;transform-origin:100% 0;transform:scaleX(0.9277);">1</div>
<div class="t" style="left:-189.8px;top:584.7px;width:300px;text-align:right;color:#000;font-size:13.6px;transform-origin:100% 0;transform:scaleX(0.9709);">811</div>
<div class="t" style="left:-157.8px;top:584.7px;width:300px;text-align:right;color:#000;font-size:13.6px;transform-origin:100% 0;transform:scaleX(0.9277);">52</div>
<div class="t" style="left:-82.80000000000001px;top:584.7px;width:300px;text-align:right;color:#000;font-size:13.6px;transform-origin:100% 0;transform:scaleX(0.9687);">20/03/2023</div>
<div class="t" style="left:-37.80000000000001px;top:584.7px;width:300px;text-align:right;color:#000;font-size:13.6px;transform-origin:100% 0;transform:scaleX(0.9277);">19133</div>
<div class="t" style="left:9.199999999999989px;top:584.7px;width:300px;text-align:right;color:#000;font-size:13.6px;transform-origin:100% 0;transform:scaleX(0.9277);">2</div>
<div class="t" style="left:43.19999999999999px;top:584.7px;width:300px;text-align:right;color:#000;font-size:13.6px;transform-origin:100% 0;transform:scaleX(0.9599);">3.5</div>
<div class="t" style="left:84.19999999999999px;top:584.7px;width:300px;text-align:right;color:#000;font-size:13.6px;transform-origin:100% 0;transform:scaleX(0.9599);">1.7</div>
<div class="t" style="left:146.2px;top:584.7px;width:300px;text-align:right;color:#000;font-size:13.6px;transform-origin:100% 0;transform:scaleX(0.9507);">1.10</div>
<div class="t" style="left:456.60px;top:584.7px;color:#000;font-size:13.6px;transform-origin:0 0;transform:scaleX(0.8991);">Auto Detach</div>
<div class="t" style="left:302.20000000000005px;top:584.7px;width:300px;text-align:right;color:#000;font-size:13.6px;transform-origin:100% 0;transform:scaleX(0.9599);">0.7</div>
<div class="t" style="left:612.60px;top:584.7px;color:#000;font-size:13.6px;transform-origin:0 0;transform:scaleX(0.8991);">Auto Detach</div>
<div class="t" style="left:457.20000000000005px;top:584.7px;width:300px;text-align:right;color:#000;font-size:13.6px;transform-origin:100% 0;transform:scaleX(0.9599);">1.0</div>
<div style="left:768px;top:592px;width:3px;height:2px;background:#505050;"></div>
<div style="left:772px;top:592px;width:2px;height:2px;background:#505050;"></div>
<div style="left:891px;top:592px;width:3px;height:2px;background:#505050;"></div>
<div style="left:895px;top:592px;width:2px;height:2px;background:#505050;"></div>
<div style="left:45px;top:604px;width:1px;height:20px;background:#e4e4e4;"></div>
<div style="left:77px;top:604px;width:1px;height:20px;background:#e4e4e4;"></div>
<div style="left:115px;top:604px;width:1px;height:20px;background:#e4e4e4;"></div>
<div style="left:147px;top:604px;width:1px;height:20px;background:#e4e4e4;"></div>
<div style="left:222px;top:604px;width:1px;height:20px;background:#e4e4e4;"></div>
<div style="left:267px;top:604px;width:1px;height:20px;background:#e4e4e4;"></div>
<div style="left:314px;top:604px;width:1px;height:20px;background:#e4e4e4;"></div>
<div style="left:348px;top:604px;width:1px;height:20px;background:#e4e4e4;"></div>
<div style="left:389px;top:604px;width:1px;height:20px;background:#e4e4e4;"></div>
<div style="left:451px;top:604px;width:1px;height:20px;background:#e4e4e4;"></div>
<div style="left:544px;top:604px;width:1px;height:20px;background:#e4e4e4;"></div>
<div style="left:607px;top:604px;width:1px;height:20px;background:#e4e4e4;"></div>
<div style="left:698px;top:604px;width:1px;height:20px;background:#e4e4e4;"></div>
<div style="left:762px;top:604px;width:1px;height:20px;background:#e4e4e4;"></div>
<div style="left:840px;top:604px;width:1px;height:20px;background:#e4e4e4;"></div>
<div style="left:902px;top:604px;width:1px;height:20px;background:#e4e4e4;"></div>
<div class="t" style="left:-259.8px;top:605.7px;width:300px;text-align:right;color:#000;font-size:13.6px;transform-origin:100% 0;transform:scaleX(0.9277);">13</div>
<div class="t" style="left:-227.8px;top:605.7px;width:300px;text-align:right;color:#000;font-size:13.6px;transform-origin:100% 0;transform:scaleX(0.9277);">1</div>
<div class="t" style="left:-189.8px;top:605.7px;width:300px;text-align:right;color:#000;font-size:13.6px;transform-origin:100% 0;transform:scaleX(0.9277);">862</div>
<div class="t" style="left:-157.8px;top:605.7px;width:300px;text-align:right;color:#000;font-size:13.6px;transform-origin:100% 0;transform:scaleX(0.9277);">43</div>
<div class="t" style="left:-82.80000000000001px;top:605.7px;width:300px;text-align:right;color:#000;font-size:13.6px;transform-origin:100% 0;transform:scaleX(0.9687);">20/03/2023</div>
<div class="t" style="left:-37.80000000000001px;top:605.7px;width:300px;text-align:right;color:#000;font-size:13.6px;transform-origin:100% 0;transform:scaleX(0.9277);">20042</div>
<div class="t" style="left:9.199999999999989px;top:605.7px;width:300px;text-align:right;color:#000;font-size:13.6px;transform-origin:100% 0;transform:scaleX(0.9277);">2</div>
<div class="t" style="left:43.19999999999999px;top:605.7px;width:300px;text-align:right;color:#000;font-size:13.6px;transform-origin:100% 0;transform:scaleX(0.9599);">8.7</div>
<div class="t" style="left:84.19999999999999px;top:605.7px;width:300px;text-align:right;color:#000;font-size:13.6px;transform-origin:100% 0;transform:scaleX(0.9507);">14.8</div>
<div class="t" style="left:146.2px;top:605.7px;width:300px;text-align:right;color:#000;font-size:13.6px;transform-origin:100% 0;transform:scaleX(0.9507);">1.30</div>
<div class="t" style="left:456.60px;top:605.7px;color:#000;font-size:13.6px;transform-origin:0 0;transform:scaleX(0.8991);">Auto Detach</div>
<div class="t" style="left:302.20000000000005px;top:605.7px;width:300px;text-align:right;color:#000;font-size:13.6px;transform-origin:100% 0;transform:scaleX(0.9507);">13.9</div>
<div class="t" style="left:612.60px;top:605.7px;color:#000;font-size:13.6px;transform-origin:0 0;transform:scaleX(0.8991);">Auto Detach</div>
<div class="t" style="left:457.20000000000005px;top:605.7px;width:300px;text-align:right;color:#000;font-size:13.6px;transform-origin:100% 0;transform:scaleX(0.9599);">0.9</div>
<div style="left:768px;top:613px;width:3px;height:2px;background:#505050;"></div>
<div style="left:772px;top:613px;width:2px;height:2px;background:#505050;"></div>
<div style="left:891px;top:613px;width:3px;height:2px;background:#505050;"></div>
<div style="left:895px;top:613px;width:2px;height:2px;background:#505050;"></div>
<div style="left:8px;top:625px;width:899px;height:20px;background:#f6f6f6;"></div>
<div style="left:45px;top:625px;width:1px;height:20px;background:#e4e4e4;"></div>
<div style="left:77px;top:625px;width:1px;height:20px;background:#e4e4e4;"></div>
<div style="left:115px;top:625px;width:1px;height:20px;background:#e4e4e4;"></div>
<div style="left:147px;top:625px;width:1px;height:20px;background:#e4e4e4;"></div>
<div style="left:222px;top:625px;width:1px;height:20px;background:#e4e4e4;"></div>
<div style="left:267px;top:625px;width:1px;height:20px;background:#e4e4e4;"></div>
<div style="left:314px;top:625px;width:1px;height:20px;background:#e4e4e4;"></div>
<div style="left:348px;top:625px;width:1px;height:20px;background:#e4e4e4;"></div>
<div style="left:389px;top:625px;width:1px;height:20px;background:#e4e4e4;"></div>
<div style="left:451px;top:625px;width:1px;height:20px;background:#e4e4e4;"></div>
<div style="left:544px;top:625px;width:1px;height:20px;background:#e4e4e4;"></div>
<div style="left:607px;top:625px;width:1px;height:20px;background:#e4e4e4;"></div>
<div style="left:698px;top:625px;width:1px;height:20px;background:#e4e4e4;"></div>
<div style="left:762px;top:625px;width:1px;height:20px;background:#e4e4e4;"></div>
<div style="left:840px;top:625px;width:1px;height:20px;background:#e4e4e4;"></div>
<div style="left:902px;top:625px;width:1px;height:20px;background:#e4e4e4;"></div>
<div class="t" style="left:-259.8px;top:626.7px;width:300px;text-align:right;color:#000;font-size:13.6px;transform-origin:100% 0;transform:scaleX(0.9277);">14</div>
<div class="t" style="left:-227.8px;top:626.7px;width:300px;text-align:right;color:#000;font-size:13.6px;transform-origin:100% 0;transform:scaleX(0.9277);">1</div>
<div class="t" style="left:-189.8px;top:626.7px;width:300px;text-align:right;color:#000;font-size:13.6px;transform-origin:100% 0;transform:scaleX(0.9277);">967</div>
<div class="t" style="left:-157.8px;top:626.7px;width:300px;text-align:right;color:#000;font-size:13.6px;transform-origin:100% 0;transform:scaleX(0.9277);">36</div>
<div class="t" style="left:-82.80000000000001px;top:626.7px;width:300px;text-align:right;color:#000;font-size:13.6px;transform-origin:100% 0;transform:scaleX(0.9687);">20/03/2023</div>
<div class="t" style="left:-37.80000000000001px;top:626.7px;width:300px;text-align:right;color:#000;font-size:13.6px;transform-origin:100% 0;transform:scaleX(0.9277);">19091</div>
<div class="t" style="left:9.199999999999989px;top:626.7px;width:300px;text-align:right;color:#000;font-size:13.6px;transform-origin:100% 0;transform:scaleX(0.9277);">4</div>
<div class="t" style="left:43.19999999999999px;top:626.7px;width:300px;text-align:right;color:#000;font-size:13.6px;transform-origin:100% 0;transform:scaleX(0.9599);">6.0</div>
<div class="t" style="left:84.19999999999999px;top:626.7px;width:300px;text-align:right;color:#000;font-size:13.6px;transform-origin:100% 0;transform:scaleX(0.9507);">16.3</div>
<div class="t" style="left:146.2px;top:626.7px;width:300px;text-align:right;color:#000;font-size:13.6px;transform-origin:100% 0;transform:scaleX(0.9507);">3.60</div>
<div class="t" style="left:456.60px;top:626.7px;color:#000;font-size:13.6px;transform-origin:0 0;transform:scaleX(0.8991);">Auto Detach</div>
<div class="t" style="left:302.20000000000005px;top:626.7px;width:300px;text-align:right;color:#000;font-size:13.6px;transform-origin:100% 0;transform:scaleX(0.9507);">13.7</div>
<div class="t" style="left:612.60px;top:626.7px;color:#000;font-size:13.6px;transform-origin:0 0;transform:scaleX(0.8991);">Auto Detach</div>
<div class="t" style="left:457.20000000000005px;top:626.7px;width:300px;text-align:right;color:#000;font-size:13.6px;transform-origin:100% 0;transform:scaleX(0.9599);">2.0</div>
<div class="t" style="left:766.40px;top:626.7px;color:#000;font-size:13.6px;transform-origin:0 0;transform:scaleX(0.8991);">Auto Detach</div>
<div class="t" style="left:597.2px;top:626.7px;width:300px;text-align:right;color:#000;font-size:13.6px;transform-origin:100% 0;transform:scaleX(0.9599);">0.1</div>
<div style="left:45px;top:646px;width:1px;height:20px;background:#e4e4e4;"></div>
<div style="left:77px;top:646px;width:1px;height:20px;background:#e4e4e4;"></div>
<div style="left:115px;top:646px;width:1px;height:20px;background:#e4e4e4;"></div>
<div style="left:147px;top:646px;width:1px;height:20px;background:#e4e4e4;"></div>
<div style="left:222px;top:646px;width:1px;height:20px;background:#e4e4e4;"></div>
<div style="left:267px;top:646px;width:1px;height:20px;background:#e4e4e4;"></div>
<div style="left:314px;top:646px;width:1px;height:20px;background:#e4e4e4;"></div>
<div style="left:348px;top:646px;width:1px;height:20px;background:#e4e4e4;"></div>
<div style="left:389px;top:646px;width:1px;height:20px;background:#e4e4e4;"></div>
<div style="left:451px;top:646px;width:1px;height:20px;background:#e4e4e4;"></div>
<div style="left:544px;top:646px;width:1px;height:20px;background:#e4e4e4;"></div>
<div style="left:607px;top:646px;width:1px;height:20px;background:#e4e4e4;"></div>
<div style="left:698px;top:646px;width:1px;height:20px;background:#e4e4e4;"></div>
<div style="left:762px;top:646px;width:1px;height:20px;background:#e4e4e4;"></div>
<div style="left:840px;top:646px;width:1px;height:20px;background:#e4e4e4;"></div>
<div style="left:902px;top:646px;width:1px;height:20px;background:#e4e4e4;"></div>
<div class="t" style="left:-259.8px;top:647.7px;width:300px;text-align:right;color:#000;font-size:13.6px;transform-origin:100% 0;transform:scaleX(0.9277);">15</div>
<div class="t" style="left:-227.8px;top:647.7px;width:300px;text-align:right;color:#000;font-size:13.6px;transform-origin:100% 0;transform:scaleX(0.9277);">1</div>
<div class="t" style="left:-189.8px;top:647.7px;width:300px;text-align:right;color:#000;font-size:13.6px;transform-origin:100% 0;transform:scaleX(0.9277);">973</div>
<div class="t" style="left:-157.8px;top:647.7px;width:300px;text-align:right;color:#000;font-size:13.6px;transform-origin:100% 0;transform:scaleX(0.9277);">42</div>
<div class="t" style="left:-82.80000000000001px;top:647.7px;width:300px;text-align:right;color:#000;font-size:13.6px;transform-origin:100% 0;transform:scaleX(0.9687);">20/03/2023</div>
<div class="t" style="left:-37.80000000000001px;top:647.7px;width:300px;text-align:right;color:#000;font-size:13.6px;transform-origin:100% 0;transform:scaleX(0.9277);">16378</div>
<div class="t" style="left:9.199999999999989px;top:647.7px;width:300px;text-align:right;color:#000;font-size:13.6px;transform-origin:100% 0;transform:scaleX(0.9277);">2</div>
<div class="t" style="left:43.19999999999999px;top:647.7px;width:300px;text-align:right;color:#000;font-size:13.6px;transform-origin:100% 0;transform:scaleX(0.9599);">7.8</div>
<div class="t" style="left:84.19999999999999px;top:647.7px;width:300px;text-align:right;color:#000;font-size:13.6px;transform-origin:100% 0;transform:scaleX(0.9507);">18.9</div>
<div style="left:440px;top:655px;width:3px;height:2px;background:#505050;"></div>
<div style="left:444px;top:655px;width:2px;height:2px;background:#505050;"></div>
<div class="t" style="left:456.60px;top:647.7px;color:#000;font-size:13.6px;transform-origin:0 0;transform:scaleX(0.8991);">Auto Detach</div>
<div class="t" style="left:302.20000000000005px;top:647.7px;width:300px;text-align:right;color:#000;font-size:13.6px;transform-origin:100% 0;transform:scaleX(0.9507);">18.7</div>
<div class="t" style="left:612.60px;top:647.7px;color:#000;font-size:13.6px;transform-origin:0 0;transform:scaleX(0.8991);">Auto Detach</div>
<div class="t" style="left:457.20000000000005px;top:647.7px;width:300px;text-align:right;color:#000;font-size:13.6px;transform-origin:100% 0;transform:scaleX(0.9599);">0.2</div>
<div style="left:768px;top:655px;width:3px;height:2px;background:#505050;"></div>
<div style="left:772px;top:655px;width:2px;height:2px;background:#505050;"></div>
<div style="left:891px;top:655px;width:3px;height:2px;background:#505050;"></div>
<div style="left:895px;top:655px;width:2px;height:2px;background:#505050;"></div>
<div style="left:8px;top:667px;width:899px;height:21px;background:#f6f6f6;"></div>
<div style="left:45px;top:667px;width:1px;height:21px;background:#e4e4e4;"></div>
<div style="left:77px;top:667px;width:1px;height:21px;background:#e4e4e4;"></div>
<div style="left:115px;top:667px;width:1px;height:21px;background:#e4e4e4;"></div>
<div style="left:147px;top:667px;width:1px;height:21px;background:#e4e4e4;"></div>
<div style="left:222px;top:667px;width:1px;height:21px;background:#e4e4e4;"></div>
<div style="left:267px;top:667px;width:1px;height:21px;background:#e4e4e4;"></div>
<div style="left:314px;top:667px;width:1px;height:21px;background:#e4e4e4;"></div>
<div style="left:348px;top:667px;width:1px;height:21px;background:#e4e4e4;"></div>
<div style="left:389px;top:667px;width:1px;height:21px;background:#e4e4e4;"></div>
<div style="left:451px;top:667px;width:1px;height:21px;background:#e4e4e4;"></div>
<div style="left:544px;top:667px;width:1px;height:21px;background:#e4e4e4;"></div>
<div style="left:607px;top:667px;width:1px;height:21px;background:#e4e4e4;"></div>
<div style="left:698px;top:667px;width:1px;height:21px;background:#e4e4e4;"></div>
<div style="left:762px;top:667px;width:1px;height:21px;background:#e4e4e4;"></div>
<div style="left:840px;top:667px;width:1px;height:21px;background:#e4e4e4;"></div>
<div style="left:902px;top:667px;width:1px;height:21px;background:#e4e4e4;"></div>
<div class="t" style="left:-259.8px;top:669.2px;width:300px;text-align:right;color:#000;font-size:13.6px;transform-origin:100% 0;transform:scaleX(0.9277);">16</div>
<div class="t" style="left:-227.8px;top:669.2px;width:300px;text-align:right;color:#000;font-size:13.6px;transform-origin:100% 0;transform:scaleX(0.9277);">1</div>
<div class="t" style="left:-189.8px;top:669.2px;width:300px;text-align:right;color:#000;font-size:13.6px;transform-origin:100% 0;transform:scaleX(0.9597);">1125</div>
<div class="t" style="left:-157.8px;top:669.2px;width:300px;text-align:right;color:#000;font-size:13.6px;transform-origin:100% 0;transform:scaleX(0.9277);">18</div>
<div class="t" style="left:-82.80000000000001px;top:669.2px;width:300px;text-align:right;color:#000;font-size:13.6px;transform-origin:100% 0;transform:scaleX(0.9687);">20/03/2023</div>
<div class="t" style="left:-37.80000000000001px;top:669.2px;width:300px;text-align:right;color:#000;font-size:13.6px;transform-origin:100% 0;transform:scaleX(0.9277);">20197</div>
<div class="t" style="left:9.199999999999989px;top:669.2px;width:300px;text-align:right;color:#000;font-size:13.6px;transform-origin:100% 0;transform:scaleX(0.9277);">2</div>
<div class="t" style="left:43.19999999999999px;top:669.2px;width:300px;text-align:right;color:#000;font-size:13.6px;transform-origin:100% 0;transform:scaleX(0.9884);">11.3</div>
<div class="t" style="left:84.19999999999999px;top:669.2px;width:300px;text-align:right;color:#000;font-size:13.6px;transform-origin:100% 0;transform:scaleX(0.9507);">13.9</div>
<div style="left:440px;top:676px;width:3px;height:2px;background:#505050;"></div>
<div style="left:444px;top:676px;width:2px;height:2px;background:#505050;"></div>
<div class="t" style="left:456.60px;top:669.2px;color:#000;font-size:13.6px;transform-origin:0 0;transform:scaleX(0.8991);">Auto Detach</div>
<div class="t" style="left:302.20000000000005px;top:669.2px;width:300px;text-align:right;color:#000;font-size:13.6px;transform-origin:100% 0;transform:scaleX(0.9507);">13.5</div>
<div class="t" style="left:612.60px;top:669.2px;color:#000;font-size:13.6px;transform-origin:0 0;transform:scaleX(0.8991);">Auto Detach</div>
<div class="t" style="left:457.20000000000005px;top:669.2px;width:300px;text-align:right;color:#000;font-size:13.6px;transform-origin:100% 0;transform:scaleX(0.9599);">0.4</div>
<div style="left:768px;top:676px;width:3px;height:2px;background:#505050;"></div>
<div style="left:772px;top:676px;width:2px;height:2px;background:#505050;"></div>
<div style="left:891px;top:676px;width:3px;height:2px;background:#505050;"></div>
<div style="left:895px;top:676px;width:2px;height:2px;background:#505050;"></div>
<div style="left:45px;top:689px;width:1px;height:20px;background:#e4e4e4;"></div>
<div style="left:77px;top:689px;width:1px;height:20px;background:#e4e4e4;"></div>
<div style="left:115px;top:689px;width:1px;height:20px;background:#e4e4e4;"></div>
<div style="left:147px;top:689px;width:1px;height:20px;background:#e4e4e4;"></div>
<div style="left:222px;top:689px;width:1px;height:20px;background:#e4e4e4;"></div>
<div style="left:267px;top:689px;width:1px;height:20px;background:#e4e4e4;"></div>
<div style="left:314px;top:689px;width:1px;height:20px;background:#e4e4e4;"></div>
<div style="left:348px;top:689px;width:1px;height:20px;background:#e4e4e4;"></div>
<div style="left:389px;top:689px;width:1px;height:20px;background:#e4e4e4;"></div>
<div style="left:451px;top:689px;width:1px;height:20px;background:#e4e4e4;"></div>
<div style="left:544px;top:689px;width:1px;height:20px;background:#e4e4e4;"></div>
<div style="left:607px;top:689px;width:1px;height:20px;background:#e4e4e4;"></div>
<div style="left:698px;top:689px;width:1px;height:20px;background:#e4e4e4;"></div>
<div style="left:762px;top:689px;width:1px;height:20px;background:#e4e4e4;"></div>
<div style="left:840px;top:689px;width:1px;height:20px;background:#e4e4e4;"></div>
<div style="left:902px;top:689px;width:1px;height:20px;background:#e4e4e4;"></div>
<div class="t" style="left:-259.8px;top:690.7px;width:300px;text-align:right;color:#000;font-size:13.6px;transform-origin:100% 0;transform:scaleX(0.9277);">17</div>
<div class="t" style="left:-227.8px;top:690.7px;width:300px;text-align:right;color:#000;font-size:13.6px;transform-origin:100% 0;transform:scaleX(0.9277);">1</div>
<div class="t" style="left:-189.8px;top:690.7px;width:300px;text-align:right;color:#000;font-size:13.6px;transform-origin:100% 0;transform:scaleX(0.9597);">1160</div>
<div class="t" style="left:-157.8px;top:690.7px;width:300px;text-align:right;color:#000;font-size:13.6px;transform-origin:100% 0;transform:scaleX(0.9277);">53</div>
<div class="t" style="left:-82.80000000000001px;top:690.7px;width:300px;text-align:right;color:#000;font-size:13.6px;transform-origin:100% 0;transform:scaleX(0.9687);">20/03/2023</div>
<div class="t" style="left:-37.80000000000001px;top:690.7px;width:300px;text-align:right;color:#000;font-size:13.6px;transform-origin:100% 0;transform:scaleX(0.9277);">16269</div>
<div class="t" style="left:9.199999999999989px;top:690.7px;width:300px;text-align:right;color:#000;font-size:13.6px;transform-origin:100% 0;transform:scaleX(0.9277);">3</div>
<div class="t" style="left:43.19999999999999px;top:690.7px;width:300px;text-align:right;color:#000;font-size:13.6px;transform-origin:100% 0;transform:scaleX(0.9599);">7.5</div>
<div class="t" style="left:84.19999999999999px;top:690.7px;width:300px;text-align:right;color:#000;font-size:13.6px;transform-origin:100% 0;transform:scaleX(0.9507);">22.5</div>
<div class="t" style="left:146.2px;top:690.7px;width:300px;text-align:right;color:#000;font-size:13.6px;transform-origin:100% 0;transform:scaleX(0.9507);">0.70</div>
<div class="t" style="left:456.60px;top:690.7px;color:#000;font-size:13.6px;transform-origin:0 0;transform:scaleX(0.8991);">Auto Detach</div>
<div class="t" style="left:302.20000000000005px;top:690.7px;width:300px;text-align:right;color:#000;font-size:13.6px;transform-origin:100% 0;transform:scaleX(0.9507);">21.1</div>
<div class="t" style="left:612.60px;top:690.7px;color:#000;font-size:13.6px;transform-origin:0 0;transform:scaleX(0.8991);">Auto Detach</div>
<div class="t" style="left:457.20000000000005px;top:690.7px;width:300px;text-align:right;color:#000;font-size:13.6px;transform-origin:100% 0;transform:scaleX(0.9599);">0.9</div>
<div class="t" style="left:766.40px;top:690.7px;color:#000;font-size:13.6px;transform-origin:0 0;transform:scaleX(0.8991);">Auto Detach</div>
<div class="t" style="left:597.2px;top:690.7px;width:300px;text-align:right;color:#000;font-size:13.6px;transform-origin:100% 0;transform:scaleX(0.9599);">0.5</div>
<div style="left:8px;top:710px;width:899px;height:20px;background:#f6f6f6;"></div>
<div style="left:45px;top:710px;width:1px;height:20px;background:#e4e4e4;"></div>
<div style="left:77px;top:710px;width:1px;height:20px;background:#e4e4e4;"></div>
<div style="left:115px;top:710px;width:1px;height:20px;background:#e4e4e4;"></div>
<div style="left:147px;top:710px;width:1px;height:20px;background:#e4e4e4;"></div>
<div style="left:222px;top:710px;width:1px;height:20px;background:#e4e4e4;"></div>
<div style="left:267px;top:710px;width:1px;height:20px;background:#e4e4e4;"></div>
<div style="left:314px;top:710px;width:1px;height:20px;background:#e4e4e4;"></div>
<div style="left:348px;top:710px;width:1px;height:20px;background:#e4e4e4;"></div>
<div style="left:389px;top:710px;width:1px;height:20px;background:#e4e4e4;"></div>
<div style="left:451px;top:710px;width:1px;height:20px;background:#e4e4e4;"></div>
<div style="left:544px;top:710px;width:1px;height:20px;background:#e4e4e4;"></div>
<div style="left:607px;top:710px;width:1px;height:20px;background:#e4e4e4;"></div>
<div style="left:698px;top:710px;width:1px;height:20px;background:#e4e4e4;"></div>
<div style="left:762px;top:710px;width:1px;height:20px;background:#e4e4e4;"></div>
<div style="left:840px;top:710px;width:1px;height:20px;background:#e4e4e4;"></div>
<div style="left:902px;top:710px;width:1px;height:20px;background:#e4e4e4;"></div>
<div class="t" style="left:13.90px;top:711.7px;color:#0000ff;font-size:13.6px;transform-origin:0 0;transform:scaleX(0.9086);">Total</div>
<div style="left:66px;top:719px;width:3px;height:2px;background:#5a5aff;"></div>
<div style="left:70px;top:719px;width:2px;height:2px;background:#5a5aff;"></div>
<div style="left:104px;top:719px;width:3px;height:2px;background:#5a5aff;"></div>
<div style="left:108px;top:719px;width:2px;height:2px;background:#5a5aff;"></div>
<div style="left:136px;top:719px;width:3px;height:2px;background:#5a5aff;"></div>
<div style="left:140px;top:719px;width:2px;height:2px;background:#5a5aff;"></div>
<div style="left:211px;top:719px;width:3px;height:2px;background:#5a5aff;"></div>
<div style="left:215px;top:719px;width:2px;height:2px;background:#5a5aff;"></div>
<div style="left:256px;top:719px;width:3px;height:2px;background:#5a5aff;"></div>
<div style="left:260px;top:719px;width:2px;height:2px;background:#5a5aff;"></div>
<div class="t" style="left:9.199999999999989px;top:711.7px;width:300px;text-align:right;color:#0000ff;font-size:13.6px;transform-origin:100% 0;transform:scaleX(0.9277);">37</div>
<div style="left:337px;top:719px;width:3px;height:2px;background:#5a5aff;"></div>
<div style="left:341px;top:719px;width:2px;height:2px;background:#5a5aff;"></div>
<div class="t" style="left:84.19999999999999px;top:711.7px;width:300px;text-align:right;color:#0000ff;font-size:13.6px;transform-origin:100% 0;transform:scaleX(0.9456);">129.2</div>
<div style="left:440px;top:719px;width:3px;height:2px;background:#5a5aff;"></div>
<div style="left:444px;top:719px;width:2px;height:2px;background:#5a5aff;"></div>
<div style="left:533px;top:719px;width:3px;height:2px;background:#5a5aff;"></div>
<div style="left:537px;top:719px;width:2px;height:2px;background:#5a5aff;"></div>
<div class="t" style="left:302.20000000000005px;top:711.7px;width:300px;text-align:right;color:#0000ff;font-size:13.6px;transform-origin:100% 0;transform:scaleX(0.9456);">120.6</div>
<div style="left:687px;top:719px;width:3px;height:2px;background:#5a5aff;"></div>
<div style="left:691px;top:719px;width:2px;height:2px;background:#5a5aff;"></div>
<div class="t" style="left:457.20000000000005px;top:711.7px;width:300px;text-align:right;color:#0000ff;font-size:13.6px;transform-origin:100% 0;transform:scaleX(0.9599);">7.2</div>
<div style="left:829px;top:719px;width:3px;height:2px;background:#5a5aff;"></div>
<div style="left:833px;top:719px;width:2px;height:2px;background:#5a5aff;"></div>
<div class="t" style="left:597.2px;top:711.7px;width:300px;text-align:right;color:#0000ff;font-size:13.6px;transform-origin:100% 0;transform:scaleX(0.9599);">0.6</div>
<div style="left:45px;top:731px;width:1px;height:21px;background:#e4e4e4;"></div>
<div style="left:77px;top:731px;width:1px;height:21px;background:#e4e4e4;"></div>
<div style="left:115px;top:731px;width:1px;height:21px;background:#e4e4e4;"></div>
<div style="left:147px;top:731px;width:1px;height:21px;background:#e4e4e4;"></div>
<div style="left:222px;top:731px;width:1px;height:21px;background:#e4e4e4;"></div>
<div style="left:267px;top:731px;width:1px;height:21px;background:#e4e4e4;"></div>
<div style="left:314px;top:731px;width:1px;height:21px;background:#e4e4e4;"></div>
<div style="left:348px;top:731px;width:1px;height:21px;background:#e4e4e4;"></div>
<div style="left:389px;top:731px;width:1px;height:21px;background:#e4e4e4;"></div>
<div style="left:451px;top:731px;width:1px;height:21px;background:#e4e4e4;"></div>
<div style="left:544px;top:731px;width:1px;height:21px;background:#e4e4e4;"></div>
<div style="left:607px;top:731px;width:1px;height:21px;background:#e4e4e4;"></div>
<div style="left:698px;top:731px;width:1px;height:21px;background:#e4e4e4;"></div>
<div style="left:762px;top:731px;width:1px;height:21px;background:#e4e4e4;"></div>
<div style="left:840px;top:731px;width:1px;height:21px;background:#e4e4e4;"></div>
<div style="left:902px;top:731px;width:1px;height:21px;background:#e4e4e4;"></div>
<div class="t" style="left:15.10px;top:733.2px;color:#ff0000;font-size:13.6px;transform-origin:0 0;transform:scaleX(0.8751);">Avg.</div>
<div style="left:66px;top:740px;width:3px;height:2px;background:#ff5a5a;"></div>
<div style="left:70px;top:740px;width:2px;height:2px;background:#ff5a5a;"></div>
<div style="left:104px;top:740px;width:3px;height:2px;background:#ff5a5a;"></div>
<div style="left:108px;top:740px;width:2px;height:2px;background:#ff5a5a;"></div>
<div style="left:136px;top:740px;width:3px;height:2px;background:#ff5a5a;"></div>
<div style="left:140px;top:740px;width:2px;height:2px;background:#ff5a5a;"></div>
<div style="left:211px;top:740px;width:3px;height:2px;background:#ff5a5a;"></div>
<div style="left:215px;top:740px;width:2px;height:2px;background:#ff5a5a;"></div>
<div style="left:256px;top:740px;width:3px;height:2px;background:#ff5a5a;"></div>
<div style="left:260px;top:740px;width:2px;height:2px;background:#ff5a5a;"></div>
<div class="t" style="left:9.199999999999989px;top:733.2px;width:300px;text-align:right;color:#ff0000;font-size:13.6px;transform-origin:100% 0;transform:scaleX(0.9277);">2</div>
<div class="t" style="left:43.19999999999999px;top:733.2px;width:300px;text-align:right;color:#ff0000;font-size:13.6px;transform-origin:100% 0;transform:scaleX(0.9599);">4.7</div>
<div class="t" style="left:84.19999999999999px;top:733.2px;width:300px;text-align:right;color:#ff0000;font-size:13.6px;transform-origin:100% 0;transform:scaleX(0.9884);">11.7</div>
<div class="t" style="left:146.2px;top:733.2px;width:300px;text-align:right;color:#ff0000;font-size:13.6px;transform-origin:100% 0;transform:scaleX(0.9507);">1.54</div>
<div style="left:533px;top:740px;width:3px;height:2px;background:#ff5a5a;"></div>
<div style="left:537px;top:740px;width:2px;height:2px;background:#ff5a5a;"></div>
<div class="t" style="left:302.20000000000005px;top:733.2px;width:300px;text-align:right;color:#ff0000;font-size:13.6px;transform-origin:100% 0;transform:scaleX(0.9884);">11.0</div>
<div style="left:687px;top:740px;width:3px;height:2px;background:#ff5a5a;"></div>
<div style="left:691px;top:740px;width:2px;height:2px;background:#ff5a5a;"></div>
<div class="t" style="left:457.20000000000005px;top:733.2px;width:300px;text-align:right;color:#ff0000;font-size:13.6px;transform-origin:100% 0;transform:scaleX(0.9599);">0.7</div>
<div style="left:829px;top:740px;width:3px;height:2px;background:#ff5a5a;"></div>
<div style="left:833px;top:740px;width:2px;height:2px;background:#ff5a5a;"></div>
<div class="t" style="left:597.2px;top:733.2px;width:300px;text-align:right;color:#ff0000;font-size:13.6px;transform-origin:100% 0;transform:scaleX(0.9599);">0.3</div>
<div style="left:697px;top:299px;width:60px;height:451px;border:3px solid #ff0000;border-radius:2px;box-shadow:0 0 0 1px rgba(255,255,255,0.8), inset 0 0 0 1px rgba(255,255,255,0.8)"></div>
</body></html>
